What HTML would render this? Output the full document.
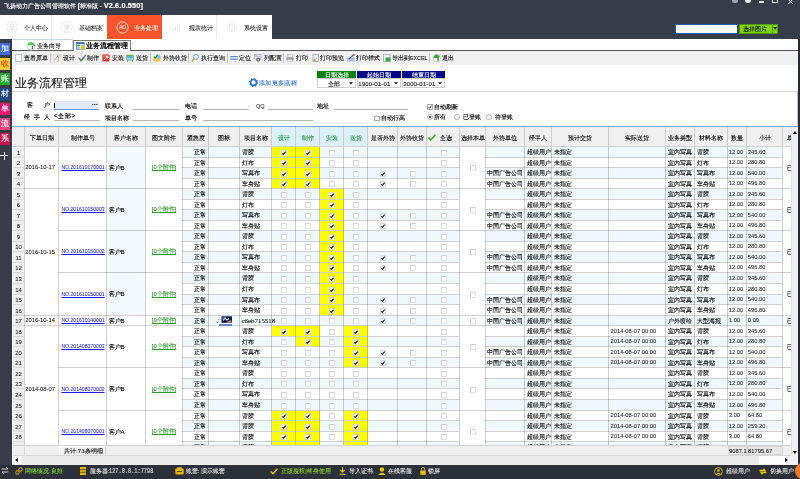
<!DOCTYPE html><html><head><meta charset='utf-8'><style>
*{margin:0;padding:0;box-sizing:border-box}
html,body{width:800px;height:479px;overflow:hidden;background:#373d48;font-family:"Liberation Sans",sans-serif;color:#222}
div{position:absolute}
.t{white-space:nowrap;font-size:6px;line-height:8px;-webkit-text-stroke:0.1px currentColor}
.u{text-decoration:underline;text-decoration-thickness:0.6px;text-underline-offset:1px}
.cb{position:absolute;width:6px;height:6px;border:1px solid #e2e2e2;border-top-color:#d2d2d2;border-left-color:#d2d2d2;background:#fff}
.ck{position:absolute;width:6px;height:6px;border:1px solid #d4d8ee;background:#fff}
.ck:after{content:"";position:absolute;left:1.3px;top:-0.2px;width:1.4px;height:2.8px;border:solid #111;border-width:0 1.1px 1.1px 0;transform:rotate(42deg)}
</style></head><body><div id='root' style='left:0;top:0;width:800px;height:479px;overflow:hidden;will-change:transform;background:#373d48'>
<div class="t" style="left:4px;top:1px;font-size:6.3px;line-height:9px;color:#fff;-webkit-text-stroke:0.15px #fff">飞扬动力广告公司管理软件 <b style='font-size:7px'>[</b>标准版 - <b style='font-size:7.4px;letter-spacing:0.1px'>V2.6.0.550]</b></div>
<div style="position:absolute;left:732px;top:0px;width:6px;height:3px;background:#9aa0a8;border-radius:0 0 2px 2px"></div>
<div style="position:absolute;left:745px;top:0px;width:6px;height:3px;background:#fff;border-radius:0 0 3px 3px"></div>
<div style="position:absolute;left:759px;top:1px;width:5px;height:1.5px;background:#e6e6e6"></div>
<div style="position:absolute;left:772px;top:0px;width:6px;height:3px;border:1px solid #d8d8d8;border-top:none"></div>
<svg style="position:absolute;left:787px;top:0" width="7" height="4" viewBox="0 0 7 4"><path d="M1 -1 L3.5 1.8 L6 -1 M1 4 L3.5 1.8 L6 4" stroke="#fff" stroke-width="1" fill="none"/></svg>
<div style="position:absolute;left:0px;top:15px;width:272px;height:24px;background:#fff"></div>
<div style="position:absolute;left:51px;top:15px;width:1px;height:24px;background:#ececec"></div>
<div style="position:absolute;left:216px;top:15px;width:1px;height:24px;background:#ececec"></div>
<div style="position:absolute;left:107px;top:15px;width:55px;height:24px;background:#f7542b"></div>
<svg style="position:absolute;left:6px;top:21px" width="12" height="12" viewBox="0 0 12 12"><circle cx="6" cy="6" r="5.4" fill="none" stroke="#dcdcdc" stroke-width="0.7"/><circle cx="6" cy="4.6" r="1.8" fill="none" stroke="#d0d0d0" stroke-width="0.7"/><path d="M2.8 9.6 Q6 6 9.2 9.6" fill="none" stroke="#d0d0d0" stroke-width="0.7"/></svg>
<svg style="position:absolute;left:61px;top:21px" width="12" height="12" viewBox="0 0 12 12"><circle cx="6" cy="6" r="5.4" fill="none" stroke="#dcdcdc" stroke-width="0.7"/><path d="M3.4 4h5.2M3.4 5.4h5.2M3.4 6.8h5.2M3.4 8.2h5.2" stroke="#d0d0d0" stroke-width="0.6"/></svg>
<svg style="position:absolute;left:116px;top:21px" width="13" height="13" viewBox="0 0 13 13"><circle cx="6.5" cy="6.5" r="5.6" fill="none" stroke="#fff" stroke-width="0.8"/><text x="6.5" y="8.4" font-size="5.2" text-anchor="middle" fill="#fff" font-family="Liberation Sans">AD</text></svg>
<svg style="position:absolute;left:171px;top:21px" width="12" height="12" viewBox="0 0 12 12"><path d="M2.5 10V7.5M4.5 10V6M6.5 10V4M8.5 10V2.5" stroke="#e0e0e0" stroke-width="0.8"/></svg>
<svg style="position:absolute;left:226px;top:21px" width="12" height="12" viewBox="0 0 12 12"><circle cx="6" cy="6" r="3" fill="none" stroke="#dedede" stroke-width="0.7"/><path d="M6 1v2M6 9v2M1 6h2M9 6h2M2.5 2.5l1.4 1.4M8.1 8.1l1.4 1.4M2.5 9.5l1.4-1.4M8.1 3.9l1.4-1.4" stroke="#dedede" stroke-width="0.7"/></svg>
<div class="t" style="left:24px;top:23.8px;font-size:6.2px;line-height:8px;color:#1a1a1a;-webkit-text-stroke:0.05px currentColor">个人中心</div>
<div class="t" style="left:79px;top:23.8px;font-size:6.2px;line-height:8px;color:#1a1a1a;-webkit-text-stroke:0.05px currentColor">基础档案</div>
<div class="t" style="left:134px;top:23.8px;font-size:6.2px;line-height:8px;color:#1a1a1a;-webkit-text-stroke:0.05px currentColor;color:#fff">业务处理</div>
<div class="t" style="left:189px;top:23.8px;font-size:6.2px;line-height:8px;color:#1a1a1a;-webkit-text-stroke:0.05px currentColor">报表统计</div>
<div class="t" style="left:244px;top:23.8px;font-size:6.2px;line-height:8px;color:#1a1a1a;-webkit-text-stroke:0.05px currentColor">系统设置</div>
<div style="position:absolute;left:675px;top:23.5px;width:63px;height:10px;background:#fff;border:1px solid #2a5db0"></div>
<div style="position:absolute;left:738.5px;top:23.5px;width:39px;height:10px;background:#7fd400;border:1px solid #4f9a00"></div>
<div style="position:absolute;left:772px;top:24px;width:0.8px;height:9px;background:#4f9a00"></div>
<div class="t" style="left:743px;top:24.5px;font-size:6.3px;line-height:8px;color:#111">选择图片</div>
<svg style="position:absolute;left:773px;top:27px" width="4" height="3" viewBox="0 0 4 3"><path d="M0 0h4L2 2.5z" fill="#111"/></svg>
<div style="position:absolute;left:0px;top:43px;width:10px;height:12px;background:#3e6ce0"></div>
<div class="t" style="left:0px;top:45px;width:10px;text-align:center;font-size:8px;line-height:8px;color:#fff">加</div>
<div style="position:absolute;left:0px;top:58px;width:10px;height:12px;background:#ffcb2e"></div>
<div class="t" style="left:0px;top:60px;width:10px;text-align:center;font-size:8px;line-height:8px;color:#d8400f">收</div>
<div style="position:absolute;left:0px;top:73px;width:10px;height:12px;background:#1fad2a"></div>
<div class="t" style="left:0px;top:75px;width:10px;text-align:center;font-size:8px;line-height:8px;color:#fff">账</div>
<div style="position:absolute;left:0px;top:88px;width:10px;height:12px;background:#1e4d8e"></div>
<div class="t" style="left:0px;top:90px;width:10px;text-align:center;font-size:8px;line-height:8px;color:#fff">材</div>
<div style="position:absolute;left:0px;top:103px;width:10px;height:12px;background:#ea1670"></div>
<div class="t" style="left:0px;top:105px;width:10px;text-align:center;font-size:8px;line-height:8px;color:#fff">单</div>
<div style="position:absolute;left:0px;top:118px;width:10px;height:12px;background:#ef3f7c"></div>
<div class="t" style="left:0px;top:120px;width:10px;text-align:center;font-size:8px;line-height:8px;color:#fff">流</div>
<div style="position:absolute;left:0px;top:133px;width:10px;height:12px;background:#c9124c"></div>
<div class="t" style="left:0px;top:135px;width:10px;text-align:center;font-size:8px;line-height:8px;color:#fff">系</div>
<div style="position:absolute;left:0.3px;top:155.3px;width:7.7px;height:1px;background:#f4f4f4"></div>
<div style="position:absolute;left:3.9px;top:151.8px;width:1px;height:8.2px;background:#f4f4f4"></div>
<div style="position:absolute;left:12px;top:39px;width:786px;height:426px;background:#fff"></div>
<div style="position:absolute;left:12px;top:50px;width:786px;height:1px;background:#555"></div>
<div style="position:absolute;left:12px;top:39.2px;width:61px;height:0.8px;background:#c9d6e3"></div>
<div style="position:absolute;left:72px;top:40px;width:0.8px;height:10px;background:#c9d6e3"></div>
<div class="t" style="left:37px;top:41.8px;font-size:6.3px;line-height:8px;color:#111;-webkit-text-stroke:0.1px currentColor">业务向导</div>
<svg style="position:absolute;left:25.5px;top:40.5px" width="10" height="10" viewBox="0 0 10 10"><circle cx="5" cy="5.3" r="3.9" fill="#fff" stroke="#a8a8a8" stroke-width="0.5"/><path d="M1.8 4.5 Q2 1.8 4.5 1.3 L6.5 1.6 L8.6 3.8 L7.6 3.8 Z" fill="#2fc02f"/><path d="M3.2 3.2 Q4 2 5.5 2.2" stroke="#7af07a" stroke-width="0.8" fill="none"/><path d="M7.2 4 L8.6 4 L8.6 5.5" fill="#0a6a0a"/><path d="M6 5 Q6.8 6 6.2 8" stroke="#0a6a0a" stroke-width="1" fill="none"/></svg>
<div style="position:absolute;left:72.5px;top:40px;width:58.5px;height:11px;background:#fff;border:1px solid #7a7a7a;border-bottom:none"></div>
<svg style="position:absolute;left:75.5px;top:41.5px" width="9" height="8" viewBox="0 0 9 8"><rect x="0.4" y="0.4" width="7.6" height="6.8" fill="#fff" stroke="#3a6ac0" stroke-width="0.8"/><rect x="0.4" y="0.4" width="7.6" height="1.6" fill="#3a6ac0"/><rect x="1.2" y="2.6" width="2.8" height="1.8" fill="#3aa53a"/><rect x="4.5" y="2.6" width="2.8" height="1.8" fill="#9ad0f0"/><rect x="1.2" y="4.9" width="2.8" height="1.8" fill="#9ad0f0"/><rect x="5" y="3.5" width="3.6" height="4.2" rx="0.8" fill="#f0c020"/></svg>
<div class="t" style="left:86px;top:41.8px;font-size:6.5px;line-height:8px;color:#000;-webkit-text-stroke:0.3px currentColor">业务流程管理</div>
<div style="position:absolute;left:14px;top:51px;width:784px;height:13.5px;background:#f0f0f0"></div>
<svg style="position:absolute;left:14.5px;top:53.5px" width="8" height="8" viewBox="0 0 8 8"><rect x="0.8" y="0.5" width="6" height="7" fill="#fff" stroke="#8aa0c8" stroke-width="0.6"/></svg>
<div class="t" style="left:24.4px;top:54px;font-size:6.1px;line-height:8px;color:#111;-webkit-text-stroke:0.1px currentColor">查看原单</div>
<div style="position:absolute;left:50.2px;top:53px;width:0.8px;height:10px;background:#c4c4c4"></div>
<svg style="position:absolute;left:53px;top:53.5px" width="8" height="8" viewBox="0 0 8 8"><rect x="0.3" y="0.8" width="7.2" height="7" fill="#f4f4f4" stroke="#d0d0d0" stroke-width="0.4"/><path d="M1 6.5 L5.5 1.5" stroke="#8a8a8a" stroke-width="0.7"/><path d="M1.2 4.5 L3 6.8" stroke="#9a9a9a" stroke-width="0.5"/><path d="M6.3 0.8 L5 7.5" stroke="#e6b040" stroke-width="1"/><circle cx="4.6" cy="2.2" r="0.6" fill="#4a6ac0"/></svg>
<div class="t" style="left:63px;top:54px;font-size:6.1px;line-height:8px;color:#111;-webkit-text-stroke:0.1px currentColor">设计</div>
<svg style="position:absolute;left:78px;top:53.5px" width="8" height="8" viewBox="0 0 8 8"><path d="M0.6 3.6 L3 6.3 L7.6 1.2" fill="none" stroke="#6a5ad8" stroke-width="1.2"/><path d="M1.8 5.2 L3 6.9 L6.5 3.6" fill="none" stroke="#2fa52f" stroke-width="1.2"/></svg>
<div class="t" style="left:87px;top:54px;font-size:6.1px;line-height:8px;color:#111;-webkit-text-stroke:0.1px currentColor">制作</div>
<svg style="position:absolute;left:102px;top:53.5px" width="8" height="8" viewBox="0 0 8 8"><rect x="0.4" y="0.6" width="7.2" height="7" rx="1" fill="#dd3a2a"/><rect x="0.4" y="0.6" width="7.2" height="3" rx="1" fill="#ef6a5a"/><path d="M2 6 L5.5 2.5 M3.8 2.3 H5.8 V4.2" fill="none" stroke="#fff" stroke-width="1"/></svg>
<div class="t" style="left:111.5px;top:54px;font-size:6.1px;line-height:8px;color:#111;-webkit-text-stroke:0.1px currentColor">安装</div>
<svg style="position:absolute;left:126px;top:53.5px" width="8" height="8" viewBox="0 0 8 8"><rect x="0.3" y="0.8" width="7.4" height="5.6" rx="0.8" fill="#5cbf3a"/><rect x="1" y="2.2" width="6" height="3.6" fill="#58b0ea"/><rect x="1" y="4" width="6" height="1.8" fill="#8fd0f8"/><path d="M1.6 6.4 V7.8 M6.4 6.4 V7.8" stroke="#3a5a8a" stroke-width="0.9"/></svg>
<div class="t" style="left:136px;top:54px;font-size:6.1px;line-height:8px;color:#111;-webkit-text-stroke:0.1px currentColor">送货</div>
<div style="position:absolute;left:150.2px;top:53px;width:0.8px;height:10px;background:#c4c4c4"></div>
<svg style="position:absolute;left:153px;top:53.5px" width="8" height="8" viewBox="0 0 8 8"><path d="M0.4 3.5 L4 2 L7.6 3.5 V7 L4 7.8 L0.4 7z" fill="#f0c43c"/><circle cx="5.2" cy="2.8" r="2.4" fill="#8ab8ea"/><path d="M0.8 2.5 L2.3 4 L4.6 0.8" fill="none" stroke="#2a9a2a" stroke-width="1.1"/></svg>
<div class="t" style="left:163px;top:54px;font-size:6.1px;line-height:8px;color:#111;-webkit-text-stroke:0.1px currentColor">外协收货</div>
<div style="position:absolute;left:188.29999999999998px;top:53px;width:0.8px;height:10px;background:#c4c4c4"></div>
<svg style="position:absolute;left:191px;top:53.5px" width="8" height="8" viewBox="0 0 8 8"><circle cx="5" cy="3" r="2.4" fill="#e6f4ff" stroke="#4a88c8" stroke-width="0.8"/><path d="M3.2 4.8 L0.7 7.4" stroke="#e8902a" stroke-width="1.4"/></svg>
<div class="t" style="left:200.6px;top:54px;font-size:6.1px;line-height:8px;color:#111;-webkit-text-stroke:0.1px currentColor">执行查询</div>
<div style="position:absolute;left:226.7px;top:53px;width:0.8px;height:10px;background:#c4c4c4"></div>
<svg style="position:absolute;left:230px;top:53.5px" width="8" height="8" viewBox="0 0 8 8"><rect x="0.3" y="2" width="7.4" height="1.3" fill="#5a8ad0"/><rect x="0.3" y="4.5" width="7.4" height="1.3" fill="#5a8ad0"/><rect x="0.3" y="3.3" width="7.4" height="1.2" fill="#c8dcf4"/></svg>
<div class="t" style="left:239px;top:54px;font-size:6.1px;line-height:8px;color:#111;-webkit-text-stroke:0.1px currentColor">定位</div>
<svg style="position:absolute;left:254px;top:53.5px" width="8" height="8" viewBox="0 0 8 8"><rect x="0.5" y="0.5" width="6.5" height="4.5" fill="#eaf2ff" stroke="#6a8ac0" stroke-width="0.5"/><path d="M0.5 2.3h6.5" stroke="#6a8ac0" stroke-width="0.5"/><circle cx="4.2" cy="5.6" r="2.1" fill="#707070"/><circle cx="4.2" cy="5.6" r="0.8" fill="#ddd"/><circle cx="2" cy="1.5" r="0.9" fill="#f0c030"/></svg>
<div class="t" style="left:264px;top:54px;font-size:6.1px;line-height:8px;color:#111;-webkit-text-stroke:0.1px currentColor">列配置</div>
<div style="position:absolute;left:283.2px;top:53px;width:0.8px;height:10px;background:#c4c4c4"></div>
<svg style="position:absolute;left:286px;top:53.5px" width="8" height="8" viewBox="0 0 8 8"><rect x="1.8" y="0.4" width="4.4" height="3" fill="#fff" stroke="#8a9ab0" stroke-width="0.5"/><rect x="0.3" y="3.2" width="7.4" height="3.3" rx="0.8" fill="#9aa4b0"/><rect x="1.5" y="5.5" width="5" height="2" fill="#fff" stroke="#999" stroke-width="0.4"/></svg>
<div class="t" style="left:296px;top:54px;font-size:6.1px;line-height:8px;color:#111;-webkit-text-stroke:0.1px currentColor">打印</div>
<svg style="position:absolute;left:311.5px;top:53.5px" width="8" height="8" viewBox="0 0 8 8"><rect x="1" y="0.3" width="5.5" height="7.2" fill="#fff" stroke="#6a90c8" stroke-width="0.6"/><path d="M2 3h3.5M2 4.5h3.5" stroke="#8ab0e0" stroke-width="0.5"/><circle cx="2.5" cy="6.2" r="1.3" fill="#e0a040"/></svg>
<div class="t" style="left:320px;top:54px;font-size:6.1px;line-height:8px;color:#111;-webkit-text-stroke:0.1px currentColor">打印预览</div>
<svg style="position:absolute;left:347px;top:53.5px" width="8" height="8" viewBox="0 0 8 8"><rect x="0.3" y="4" width="7.4" height="3.5" fill="#a8c0e0"/><path d="M2 5 L6.5 0.8" stroke="#2a5ab0" stroke-width="1.1"/><circle cx="6.8" cy="1" r="0.9" fill="#e04040"/></svg>
<div class="t" style="left:356px;top:54px;font-size:6.1px;line-height:8px;color:#111;-webkit-text-stroke:0.1px currentColor">打印样式</div>
<svg style="position:absolute;left:383px;top:53.5px" width="8" height="8" viewBox="0 0 8 8"><rect x="0.5" y="0.5" width="6.5" height="7" fill="#eef4ff" stroke="#7a9ac8" stroke-width="0.6"/><rect x="2.5" y="3.5" width="5" height="4" fill="#3aa53a"/></svg>
<div class="t" style="left:392px;top:54px;font-size:6.1px;line-height:8px;color:#111;-webkit-text-stroke:0.1px currentColor">导出到<span style='font-size:5.3px'>EXCEL</span></div>
<div style="position:absolute;left:428.7px;top:53px;width:0.8px;height:10px;background:#c4c4c4"></div>
<svg style="position:absolute;left:433px;top:53.5px" width="8" height="8" viewBox="0 0 8 8"><circle cx="4" cy="4.2" r="3.7" fill="#fff" stroke="#9a9a9a" stroke-width="0.5"/><path d="M0.5 3.8 Q1 0.5 4.2 0.5 L7.2 3 L5.8 3 L5.8 7.2 L4.3 7.2 L4.3 4 Z" fill="#2fa52f"/></svg>
<div class="t" style="left:442px;top:54px;font-size:6.1px;line-height:8px;color:#111;-webkit-text-stroke:0.1px currentColor">退出</div>
<div class="t" style="left:14.8px;top:76.5px;font-size:12px;line-height:12px;color:#111">业务流程管理</div>
<svg style="position:absolute;left:249px;top:77.5px" width="9" height="9" viewBox="0 0 9 9"><circle cx="4.5" cy="4.5" r="3" fill="none" stroke="#1f6fe0" stroke-width="1.7"/><circle cx="4.5" cy="4.5" r="3.9" fill="none" stroke="#1f6fe0" stroke-width="1.2" stroke-dasharray="1.3 1.75"/></svg>
<div class="t" style="left:259.2px;top:79.2px;font-size:6px;letter-spacing:0.3px;line-height:8px;color:#2a6ee8">添加更多流程</div>
<div style="position:absolute;left:317px;top:71px;width:39.3px;height:7px;background:#06800f"></div>
<div class="t" style="left:317px;top:70.5px;width:39.3px;text-align:center;font-size:6.2px;line-height:8px;color:#fff">日期选择</div>
<div style="position:absolute;left:317px;top:78.4px;width:39.3px;height:9.2px;background:#fff;border:1px solid #cfcfcf"></div>
<div class="t" style="left:318.2px;top:79.5px;text-align:center;width:31px;font-size:6px;line-height:8px;color:#111;letter-spacing:0.15px">全部</div>
<svg style="position:absolute;left:349.3px;top:82px" width="4" height="3" viewBox="0 0 4 3"><path d="M0 0.3h4L2 2.6z" fill="#111"/></svg>
<div style="position:absolute;left:357px;top:71px;width:43.6px;height:7px;background:#000a88"></div>
<div class="t" style="left:357px;top:70.5px;width:43.6px;text-align:center;font-size:6.2px;line-height:8px;color:#fff">起始日期</div>
<div style="position:absolute;left:357px;top:78.4px;width:43.6px;height:9.2px;background:#fff;border:1px solid #cfcfcf"></div>
<div class="t" style="left:358.2px;top:79.5px;font-size:6px;line-height:8px;color:#111;letter-spacing:0.15px">1900-01-01</div>
<svg style="position:absolute;left:393.6px;top:82px" width="4" height="3" viewBox="0 0 4 3"><path d="M0 0.3h4L2 2.6z" fill="#111"/></svg>
<div style="position:absolute;left:402px;top:71px;width:43px;height:7px;background:#000a88"></div>
<div class="t" style="left:402px;top:70.5px;width:43px;text-align:center;font-size:6.2px;line-height:8px;color:#fff">结束日期</div>
<div style="position:absolute;left:402px;top:78.4px;width:43px;height:9.2px;background:#fff;border:1px solid #cfcfcf"></div>
<div class="t" style="left:403.2px;top:79.5px;font-size:6px;line-height:8px;color:#111;letter-spacing:0.15px">3000-01-01</div>
<svg style="position:absolute;left:438px;top:82px" width="4" height="3" viewBox="0 0 4 3"><path d="M0 0.3h4L2 2.6z" fill="#111"/></svg>
<div style="position:absolute;left:12px;top:90.5px;width:786px;height:1.6px;background:#dcdcdc"></div>
<div class="t" style="left:26.9px;top:101px;font-size:6.3px;line-height:8px;color:#000;-webkit-text-stroke:0.15px currentColor">客</div>
<div class="t" style="left:43.7px;top:101px;font-size:6.3px;line-height:8px;color:#000;-webkit-text-stroke:0.15px currentColor">户</div>
<div style="position:absolute;left:53.8px;top:101px;width:45.6px;height:8.6px;background:#e1e8fb;border-bottom:1px solid #5a9ae8"></div>
<div style="position:absolute;left:54.2px;top:102.5px;width:0.7px;height:5.5px;background:#111"></div>
<div class="t" style="left:92px;top:101.4px;font-size:6px;line-height:6px;color:#333;font-weight:bold">···</div>
<div class="t" style="left:24.4px;top:112.5px;font-size:6.3px;line-height:8px;color:#000;-webkit-text-stroke:0.15px currentColor">经</div>
<div class="t" style="left:34.4px;top:112.5px;font-size:6.3px;line-height:8px;color:#000;-webkit-text-stroke:0.15px currentColor">手</div>
<div class="t" style="left:43.7px;top:112.5px;font-size:6.3px;line-height:8px;color:#000;-webkit-text-stroke:0.15px currentColor">人</div>
<div class="t" style="left:54px;top:112px;font-size:6.3px;line-height:8px;color:#000;-webkit-text-stroke:0.15px currentColor">&lt;全 部&gt;</div>
<div style="position:absolute;left:54px;top:120px;width:45.5px;height:0.8px;background:#b4b4b4"></div>
<div class="t" style="left:104.7px;top:101.5px;font-size:6.3px;line-height:8px;color:#000;-webkit-text-stroke:0.15px currentColor">联系人</div>
<div style="position:absolute;left:133.4px;top:108.8px;width:45.4px;height:0.8px;background:#b4b4b4"></div>
<div class="t" style="left:104.7px;top:113.5px;font-size:6.3px;line-height:8px;color:#000;-webkit-text-stroke:0.15px currentColor">项目名称</div>
<div style="position:absolute;left:133.4px;top:120px;width:45.4px;height:0.8px;background:#b4b4b4"></div>
<div class="t" style="left:185.4px;top:101.5px;font-size:6.3px;line-height:8px;color:#000;-webkit-text-stroke:0.15px currentColor">电话</div>
<div style="position:absolute;left:203px;top:108.8px;width:46px;height:0.8px;background:#b4b4b4"></div>
<div class="t" style="left:185.4px;top:113.5px;font-size:6.3px;line-height:8px;color:#000;-webkit-text-stroke:0.15px currentColor">单号</div>
<div style="position:absolute;left:203px;top:120px;width:110px;height:0.8px;background:#b4b4b4"></div>
<div class="t" style="left:256px;top:102px;font-size:5.5px;line-height:8px;color:#333">QQ</div>
<div style="position:absolute;left:267.8px;top:108.8px;width:45.2px;height:0.8px;background:#b4b4b4"></div>
<div class="t" style="left:316.5px;top:101.5px;font-size:6.3px;line-height:8px;color:#000;-webkit-text-stroke:0.15px currentColor">地址</div>
<div style="position:absolute;left:333.8px;top:108.8px;width:74px;height:0.8px;background:#b4b4b4"></div>
<div style="position:absolute;left:374px;top:115.5px;width:5.5px;height:5.5px;border:0.8px solid #aaa;background:#fff"></div>
<div class="t" style="left:381px;top:114px;font-size:6.3px;line-height:8px;color:#000;-webkit-text-stroke:0.15px currentColor">自动行高</div>
<div style="position:absolute;left:427px;top:104.3px;width:5.5px;height:5.5px;border:0.8px solid #aaa;background:#fff"></div>
<svg style="position:absolute;left:427.5px;top:104.8px" width="4" height="4" viewBox="0 0 4 4"><path d="M0.5 2 L1.6 3.3 L3.6 0.6" fill="none" stroke="#111" stroke-width="0.9"/></svg>
<div class="t" style="left:434.4px;top:102.8px;font-size:6.3px;line-height:8px;color:#000;-webkit-text-stroke:0.15px currentColor">自动刷新</div>
<svg style="position:absolute;left:426.5px;top:114px" width="6" height="6" viewBox="0 0 6 6"><circle cx="3" cy="3" r="2.5" fill="#fff" stroke="#888" stroke-width="0.6"/><circle cx="3" cy="3" r="1" fill="#111"/></svg>
<div class="t" style="left:434.4px;top:112.8px;font-size:6.3px;line-height:8px;color:#000;-webkit-text-stroke:0.15px currentColor">所有</div>
<svg style="position:absolute;left:454px;top:114px" width="6" height="6" viewBox="0 0 6 6"><circle cx="3" cy="3" r="2.5" fill="#fff" stroke="#888" stroke-width="0.6"/></svg>
<div class="t" style="left:462.5px;top:112.8px;font-size:6.3px;line-height:8px;color:#000;-webkit-text-stroke:0.15px currentColor">已登账</div>
<svg style="position:absolute;left:486px;top:114px" width="6" height="6" viewBox="0 0 6 6"><circle cx="3" cy="3" r="2.5" fill="#fff" stroke="#888" stroke-width="0.6"/></svg>
<div class="t" style="left:494.8px;top:112.8px;font-size:6.3px;line-height:8px;color:#000;-webkit-text-stroke:0.15px currentColor">待登账</div>
<div style="left:12.00px;top:126.00px;width:786.00px;height:1.00px;background:#7ba7d7"></div>
<div style="left:12.00px;top:127.00px;width:779.00px;height:19.00px;background:#efefef"></div>
<div style="left:12.00px;top:127.00px;width:1.00px;height:19.00px;background:#fff"></div>
<div style="left:272.00px;top:127.00px;width:23.00px;height:19.00px;background:#dcf0fb"></div>
<div style="left:296.00px;top:127.00px;width:23.00px;height:19.00px;background:#dcf0fb"></div>
<div style="left:320.00px;top:127.00px;width:23.00px;height:19.00px;background:#dcf0fb"></div>
<div style="left:344.00px;top:127.00px;width:23.00px;height:19.00px;background:#dcf0fb"></div>
<div class="t" style="left:25.00px;top:128.00px;width:33.00px;height:19.00px;line-height:19.00px;text-align:center;font-size:6.1px;color:#000">下单日期</div>
<div class="t" style="left:59.00px;top:128.00px;width:47.00px;height:19.00px;line-height:19.00px;text-align:center;font-size:6.1px;color:#000">制作单号</div>
<div class="t" style="left:107.00px;top:128.00px;width:38.00px;height:19.00px;line-height:19.00px;text-align:center;font-size:6.1px;color:#000">客户名称</div>
<div class="t" style="left:146.00px;top:128.00px;width:36.00px;height:19.00px;line-height:19.00px;text-align:center;font-size:6.1px;color:#000">图文附件</div>
<div class="t" style="left:183.00px;top:128.00px;width:25.00px;height:19.00px;line-height:19.00px;text-align:center;font-size:6.1px;color:#000">紧急度</div>
<div class="t" style="left:209.00px;top:128.00px;width:30.00px;height:19.00px;line-height:19.00px;text-align:center;font-size:6.1px;color:#000">图标</div>
<div class="t" style="left:240.00px;top:128.00px;width:31.00px;height:19.00px;line-height:19.00px;text-align:center;font-size:6.1px;color:#000">项目名称</div>
<div class="t" style="left:272.00px;top:128.00px;width:23.00px;height:19.00px;line-height:19.00px;text-align:center;font-size:6.1px;color:#000;color:#2b9a3c">设计</div>
<div class="t" style="left:296.00px;top:128.00px;width:23.00px;height:19.00px;line-height:19.00px;text-align:center;font-size:6.1px;color:#000;color:#2b9a3c">制作</div>
<div class="t" style="left:320.00px;top:128.00px;width:23.00px;height:19.00px;line-height:19.00px;text-align:center;font-size:6.1px;color:#000;color:#2b9a3c">安装</div>
<div class="t" style="left:344.00px;top:128.00px;width:23.00px;height:19.00px;line-height:19.00px;text-align:center;font-size:6.1px;color:#000;color:#2b9a3c">送货</div>
<div class="t" style="left:368.00px;top:128.00px;width:29.00px;height:19.00px;line-height:19.00px;text-align:center;font-size:6.1px;color:#000">是否外协</div>
<div class="t" style="left:398.00px;top:128.00px;width:28.00px;height:19.00px;line-height:19.00px;text-align:center;font-size:6.1px;color:#000">外协收货</div>
<div class="t" style="left:427.00px;top:128.00px;width:32.00px;height:19.00px;line-height:19.00px;text-align:center;font-size:6.1px;color:#000">&nbsp;&nbsp;&nbsp;全选</div>
<svg style="position:absolute;left:428px;top:134px" width="8" height="7" viewBox="0 0 8 7"><path d="M0.6 3.6 L2.8 6 L7.4 0.8" fill="none" stroke="#33bb22" stroke-width="1.6"/></svg>
<div class="t" style="left:460.00px;top:128.00px;width:25.00px;height:19.00px;line-height:19.00px;text-align:center;font-size:6.1px;color:#000">选择本单</div>
<div class="t" style="left:486.00px;top:128.00px;width:38.00px;height:19.00px;line-height:19.00px;text-align:center;font-size:6.1px;color:#000">外协单位</div>
<div class="t" style="left:525.00px;top:128.00px;width:26.00px;height:19.00px;line-height:19.00px;text-align:center;font-size:6.1px;color:#000">经手人</div>
<div class="t" style="left:552.00px;top:128.00px;width:56.00px;height:19.00px;line-height:19.00px;text-align:center;font-size:6.1px;color:#000">预计交货</div>
<div class="t" style="left:609.00px;top:128.00px;width:56.00px;height:19.00px;line-height:19.00px;text-align:center;font-size:6.1px;color:#000">实际送货</div>
<div class="t" style="left:666.00px;top:128.00px;width:28.00px;height:19.00px;line-height:19.00px;text-align:center;font-size:6.1px;color:#000">业务类型</div>
<div class="t" style="left:695.00px;top:128.00px;width:32.00px;height:19.00px;line-height:19.00px;text-align:center;font-size:6.1px;color:#000">材料名称</div>
<div class="t" style="left:728.00px;top:128.00px;width:18.00px;height:19.00px;line-height:19.00px;text-align:center;font-size:6.1px;color:#000">数量</div>
<div class="t" style="left:747.00px;top:128.00px;width:35.00px;height:19.00px;line-height:19.00px;text-align:center;font-size:6.1px;color:#000">小计</div>
<div class="t" style="left:786.50px;top:134.00px;font-size:6.1px;color:#000">单</div>
<div style="left:24.00px;top:127.00px;width:1.00px;height:19.00px;background:#cdcdcd"></div>
<div style="left:58.00px;top:127.00px;width:1.00px;height:19.00px;background:#cdcdcd"></div>
<div style="left:106.00px;top:127.00px;width:1.00px;height:19.00px;background:#cdcdcd"></div>
<div style="left:145.00px;top:127.00px;width:1.00px;height:19.00px;background:#cdcdcd"></div>
<div style="left:182.00px;top:127.00px;width:1.00px;height:19.00px;background:#cdcdcd"></div>
<div style="left:208.00px;top:127.00px;width:1.00px;height:19.00px;background:#cdcdcd"></div>
<div style="left:239.00px;top:127.00px;width:1.00px;height:19.00px;background:#cdcdcd"></div>
<div style="left:271.00px;top:127.00px;width:1.00px;height:19.00px;background:#cdcdcd"></div>
<div style="left:295.00px;top:127.00px;width:1.00px;height:19.00px;background:#cdcdcd"></div>
<div style="left:319.00px;top:127.00px;width:1.00px;height:19.00px;background:#cdcdcd"></div>
<div style="left:343.00px;top:127.00px;width:1.00px;height:19.00px;background:#cdcdcd"></div>
<div style="left:367.00px;top:127.00px;width:1.00px;height:19.00px;background:#cdcdcd"></div>
<div style="left:397.00px;top:127.00px;width:1.00px;height:19.00px;background:#cdcdcd"></div>
<div style="left:426.00px;top:127.00px;width:1.00px;height:19.00px;background:#cdcdcd"></div>
<div style="left:459.00px;top:127.00px;width:1.00px;height:19.00px;background:#cdcdcd"></div>
<div style="left:485.00px;top:127.00px;width:1.00px;height:19.00px;background:#cdcdcd"></div>
<div style="left:524.00px;top:127.00px;width:1.00px;height:19.00px;background:#cdcdcd"></div>
<div style="left:551.00px;top:127.00px;width:1.00px;height:19.00px;background:#cdcdcd"></div>
<div style="left:608.00px;top:127.00px;width:1.00px;height:19.00px;background:#cdcdcd"></div>
<div style="left:665.00px;top:127.00px;width:1.00px;height:19.00px;background:#cdcdcd"></div>
<div style="left:694.00px;top:127.00px;width:1.00px;height:19.00px;background:#cdcdcd"></div>
<div style="left:727.00px;top:127.00px;width:1.00px;height:19.00px;background:#cdcdcd"></div>
<div style="left:746.00px;top:127.00px;width:1.00px;height:19.00px;background:#cdcdcd"></div>
<div style="left:782.00px;top:127.00px;width:1.00px;height:19.00px;background:#cdcdcd"></div>
<div style="left:12.00px;top:146.00px;width:779.00px;height:1.00px;background:#d2d2d2"></div>
<div style="left:12px;top:147px;width:779px;height:298px;overflow:hidden">
<div style="left:0.00px;top:0.00px;width:779.00px;height:298.00px;background:#fff"></div>
<div style="left:1.00px;top:0.00px;width:11.00px;height:320.00px;background:#efefef"></div>
<div style="left:171.00px;top:0.00px;width:276.00px;height:10.00px;background:#eef8fd"></div>
<div style="left:474.00px;top:0.00px;width:296.00px;height:10.00px;background:#eef8fd"></div>
<div style="left:260.00px;top:0.00px;width:24.00px;height:10.00px;background:#ffff00"></div>
<div style="left:284.00px;top:0.00px;width:24.00px;height:10.00px;background:#ffff00"></div>
<div style="left:260.00px;top:11.00px;width:24.00px;height:9.00px;background:#ffff00"></div>
<div style="left:284.00px;top:11.00px;width:24.00px;height:9.00px;background:#ffff00"></div>
<div style="left:171.00px;top:21.00px;width:276.00px;height:10.00px;background:#eef8fd"></div>
<div style="left:474.00px;top:21.00px;width:296.00px;height:10.00px;background:#eef8fd"></div>
<div style="left:260.00px;top:21.00px;width:24.00px;height:10.00px;background:#ffff00"></div>
<div style="left:284.00px;top:21.00px;width:24.00px;height:10.00px;background:#ffff00"></div>
<div style="left:260.00px;top:32.00px;width:24.00px;height:9.00px;background:#ffff00"></div>
<div style="left:284.00px;top:32.00px;width:24.00px;height:9.00px;background:#ffff00"></div>
<div style="left:171.00px;top:42.00px;width:276.00px;height:10.00px;background:#eef8fd"></div>
<div style="left:474.00px;top:42.00px;width:296.00px;height:10.00px;background:#eef8fd"></div>
<div style="left:308.00px;top:42.00px;width:24.00px;height:10.00px;background:#ffff00"></div>
<div style="left:308.00px;top:53.00px;width:24.00px;height:9.00px;background:#ffff00"></div>
<div style="left:171.00px;top:63.00px;width:276.00px;height:10.00px;background:#eef8fd"></div>
<div style="left:474.00px;top:63.00px;width:296.00px;height:10.00px;background:#eef8fd"></div>
<div style="left:308.00px;top:63.00px;width:24.00px;height:10.00px;background:#ffff00"></div>
<div style="left:308.00px;top:74.00px;width:24.00px;height:9.00px;background:#ffff00"></div>
<div style="left:171.00px;top:84.00px;width:276.00px;height:10.00px;background:#eef8fd"></div>
<div style="left:474.00px;top:84.00px;width:296.00px;height:10.00px;background:#eef8fd"></div>
<div style="left:308.00px;top:84.00px;width:24.00px;height:10.00px;background:#ffff00"></div>
<div style="left:308.00px;top:95.00px;width:24.00px;height:9.00px;background:#ffff00"></div>
<div style="left:171.00px;top:105.00px;width:276.00px;height:10.00px;background:#eef8fd"></div>
<div style="left:474.00px;top:105.00px;width:296.00px;height:10.00px;background:#eef8fd"></div>
<div style="left:308.00px;top:105.00px;width:24.00px;height:10.00px;background:#ffff00"></div>
<div style="left:308.00px;top:116.00px;width:24.00px;height:9.00px;background:#ffff00"></div>
<div style="left:171.00px;top:126.00px;width:276.00px;height:10.00px;background:#eef8fd"></div>
<div style="left:474.00px;top:126.00px;width:296.00px;height:10.00px;background:#eef8fd"></div>
<div style="left:308.00px;top:126.00px;width:24.00px;height:10.00px;background:#ffff00"></div>
<div style="left:308.00px;top:137.00px;width:24.00px;height:10.00px;background:#ffff00"></div>
<div style="left:171.00px;top:148.00px;width:276.00px;height:9.00px;background:#eef8fd"></div>
<div style="left:474.00px;top:148.00px;width:296.00px;height:9.00px;background:#eef8fd"></div>
<div style="left:308.00px;top:148.00px;width:24.00px;height:9.00px;background:#ffff00"></div>
<div style="left:308.00px;top:158.00px;width:24.00px;height:10.00px;background:#ffff00"></div>
<div style="left:171.00px;top:169.00px;width:276.00px;height:9.00px;background:#eef8fd"></div>
<div style="left:474.00px;top:169.00px;width:296.00px;height:9.00px;background:#eef8fd"></div>
<div style="left:260.00px;top:179.00px;width:24.00px;height:10.00px;background:#ffff00"></div>
<div style="left:284.00px;top:179.00px;width:24.00px;height:10.00px;background:#ffff00"></div>
<div style="left:332.00px;top:179.00px;width:24.00px;height:10.00px;background:#ffff00"></div>
<div style="left:171.00px;top:190.00px;width:276.00px;height:9.00px;background:#eef8fd"></div>
<div style="left:474.00px;top:190.00px;width:296.00px;height:9.00px;background:#eef8fd"></div>
<div style="left:284.00px;top:190.00px;width:24.00px;height:9.00px;background:#ffff00"></div>
<div style="left:332.00px;top:190.00px;width:24.00px;height:9.00px;background:#ffff00"></div>
<div style="left:332.00px;top:200.00px;width:24.00px;height:10.00px;background:#ffff00"></div>
<div style="left:171.00px;top:211.00px;width:276.00px;height:9.00px;background:#eef8fd"></div>
<div style="left:474.00px;top:211.00px;width:296.00px;height:9.00px;background:#eef8fd"></div>
<div style="left:332.00px;top:211.00px;width:24.00px;height:9.00px;background:#ffff00"></div>
<div style="left:171.00px;top:232.00px;width:276.00px;height:9.00px;background:#eef8fd"></div>
<div style="left:474.00px;top:232.00px;width:296.00px;height:9.00px;background:#eef8fd"></div>
<div style="left:171.00px;top:253.00px;width:276.00px;height:10.00px;background:#eef8fd"></div>
<div style="left:474.00px;top:253.00px;width:296.00px;height:10.00px;background:#eef8fd"></div>
<div style="left:260.00px;top:264.00px;width:24.00px;height:9.00px;background:#ffff00"></div>
<div style="left:284.00px;top:264.00px;width:24.00px;height:9.00px;background:#ffff00"></div>
<div style="left:332.00px;top:264.00px;width:24.00px;height:9.00px;background:#ffff00"></div>
<div style="left:171.00px;top:274.00px;width:276.00px;height:10.00px;background:#eef8fd"></div>
<div style="left:474.00px;top:274.00px;width:296.00px;height:10.00px;background:#eef8fd"></div>
<div style="left:260.00px;top:274.00px;width:24.00px;height:10.00px;background:#ffff00"></div>
<div style="left:284.00px;top:274.00px;width:24.00px;height:10.00px;background:#ffff00"></div>
<div style="left:332.00px;top:274.00px;width:24.00px;height:10.00px;background:#ffff00"></div>
<div style="left:260.00px;top:285.00px;width:24.00px;height:9.00px;background:#ffff00"></div>
<div style="left:284.00px;top:285.00px;width:24.00px;height:9.00px;background:#ffff00"></div>
<div style="left:332.00px;top:285.00px;width:24.00px;height:9.00px;background:#ffff00"></div>
<div style="left:171.00px;top:295.00px;width:276.00px;height:10.00px;background:#eef8fd"></div>
<div style="left:474.00px;top:295.00px;width:296.00px;height:10.00px;background:#eef8fd"></div>
<div style="left:260.00px;top:295.00px;width:24.00px;height:10.00px;background:#ffff00"></div>
<div style="left:284.00px;top:295.00px;width:24.00px;height:10.00px;background:#ffff00"></div>
<div style="left:332.00px;top:295.00px;width:24.00px;height:10.00px;background:#ffff00"></div>
<div style="left:260.00px;top:306.00px;width:24.00px;height:9.00px;background:#ffff00"></div>
<div style="left:284.00px;top:306.00px;width:24.00px;height:9.00px;background:#ffff00"></div>
<div style="left:332.00px;top:306.00px;width:24.00px;height:9.00px;background:#ffff00"></div>
<div style="left:95.00px;top:0.00px;width:38.00px;height:168.00px;background:#f2fafd"></div>
<div style="left:1.00px;top:10.00px;width:11.00px;height:1.00px;background:#d9d9d9"></div>
<div style="left:170.00px;top:10.00px;width:277.00px;height:1.00px;background:rgba(0,0,0,0.19)"></div>
<div style="left:473.00px;top:10.00px;width:297.00px;height:1.00px;background:rgba(0,0,0,0.19)"></div>
<div style="left:1.00px;top:20.00px;width:11.00px;height:1.00px;background:#d9d9d9"></div>
<div style="left:170.00px;top:20.00px;width:277.00px;height:1.00px;background:rgba(0,0,0,0.19)"></div>
<div style="left:473.00px;top:20.00px;width:297.00px;height:1.00px;background:rgba(0,0,0,0.19)"></div>
<div style="left:1.00px;top:31.00px;width:11.00px;height:1.00px;background:#d9d9d9"></div>
<div style="left:170.00px;top:31.00px;width:277.00px;height:1.00px;background:rgba(0,0,0,0.19)"></div>
<div style="left:473.00px;top:31.00px;width:297.00px;height:1.00px;background:rgba(0,0,0,0.19)"></div>
<div style="left:1.00px;top:41.00px;width:11.00px;height:1.00px;background:#d9d9d9"></div>
<div style="left:170.00px;top:41.00px;width:277.00px;height:1.00px;background:rgba(0,0,0,0.19)"></div>
<div style="left:473.00px;top:41.00px;width:297.00px;height:1.00px;background:rgba(0,0,0,0.19)"></div>
<div style="left:1.00px;top:52.00px;width:11.00px;height:1.00px;background:#d9d9d9"></div>
<div style="left:170.00px;top:52.00px;width:277.00px;height:1.00px;background:rgba(0,0,0,0.19)"></div>
<div style="left:473.00px;top:52.00px;width:297.00px;height:1.00px;background:rgba(0,0,0,0.19)"></div>
<div style="left:1.00px;top:62.00px;width:11.00px;height:1.00px;background:#d9d9d9"></div>
<div style="left:170.00px;top:62.00px;width:277.00px;height:1.00px;background:rgba(0,0,0,0.19)"></div>
<div style="left:473.00px;top:62.00px;width:297.00px;height:1.00px;background:rgba(0,0,0,0.19)"></div>
<div style="left:1.00px;top:73.00px;width:11.00px;height:1.00px;background:#d9d9d9"></div>
<div style="left:170.00px;top:73.00px;width:277.00px;height:1.00px;background:rgba(0,0,0,0.19)"></div>
<div style="left:473.00px;top:73.00px;width:297.00px;height:1.00px;background:rgba(0,0,0,0.19)"></div>
<div style="left:1.00px;top:83.00px;width:11.00px;height:1.00px;background:#d9d9d9"></div>
<div style="left:170.00px;top:83.00px;width:277.00px;height:1.00px;background:rgba(0,0,0,0.19)"></div>
<div style="left:473.00px;top:83.00px;width:297.00px;height:1.00px;background:rgba(0,0,0,0.19)"></div>
<div style="left:1.00px;top:94.00px;width:11.00px;height:1.00px;background:#d9d9d9"></div>
<div style="left:170.00px;top:94.00px;width:277.00px;height:1.00px;background:rgba(0,0,0,0.19)"></div>
<div style="left:473.00px;top:94.00px;width:297.00px;height:1.00px;background:rgba(0,0,0,0.19)"></div>
<div style="left:1.00px;top:104.00px;width:11.00px;height:1.00px;background:#d9d9d9"></div>
<div style="left:170.00px;top:104.00px;width:277.00px;height:1.00px;background:rgba(0,0,0,0.19)"></div>
<div style="left:473.00px;top:104.00px;width:297.00px;height:1.00px;background:rgba(0,0,0,0.19)"></div>
<div style="left:1.00px;top:115.00px;width:11.00px;height:1.00px;background:#d9d9d9"></div>
<div style="left:170.00px;top:115.00px;width:277.00px;height:1.00px;background:rgba(0,0,0,0.19)"></div>
<div style="left:473.00px;top:115.00px;width:297.00px;height:1.00px;background:rgba(0,0,0,0.19)"></div>
<div style="left:1.00px;top:125.00px;width:11.00px;height:1.00px;background:#d9d9d9"></div>
<div style="left:170.00px;top:125.00px;width:277.00px;height:1.00px;background:rgba(0,0,0,0.19)"></div>
<div style="left:473.00px;top:125.00px;width:297.00px;height:1.00px;background:rgba(0,0,0,0.19)"></div>
<div style="left:1.00px;top:136.00px;width:11.00px;height:1.00px;background:#d9d9d9"></div>
<div style="left:170.00px;top:136.00px;width:277.00px;height:1.00px;background:rgba(0,0,0,0.19)"></div>
<div style="left:473.00px;top:136.00px;width:297.00px;height:1.00px;background:rgba(0,0,0,0.19)"></div>
<div style="left:1.00px;top:147.00px;width:11.00px;height:1.00px;background:#d9d9d9"></div>
<div style="left:170.00px;top:147.00px;width:277.00px;height:1.00px;background:rgba(0,0,0,0.19)"></div>
<div style="left:473.00px;top:147.00px;width:297.00px;height:1.00px;background:rgba(0,0,0,0.19)"></div>
<div style="left:1.00px;top:157.00px;width:11.00px;height:1.00px;background:#d9d9d9"></div>
<div style="left:170.00px;top:157.00px;width:277.00px;height:1.00px;background:rgba(0,0,0,0.19)"></div>
<div style="left:473.00px;top:157.00px;width:297.00px;height:1.00px;background:rgba(0,0,0,0.19)"></div>
<div style="left:1.00px;top:168.00px;width:11.00px;height:1.00px;background:#d9d9d9"></div>
<div style="left:170.00px;top:168.00px;width:277.00px;height:1.00px;background:rgba(0,0,0,0.19)"></div>
<div style="left:473.00px;top:168.00px;width:297.00px;height:1.00px;background:rgba(0,0,0,0.19)"></div>
<div style="left:1.00px;top:178.00px;width:11.00px;height:1.00px;background:#d9d9d9"></div>
<div style="left:170.00px;top:178.00px;width:277.00px;height:1.00px;background:rgba(0,0,0,0.19)"></div>
<div style="left:473.00px;top:178.00px;width:297.00px;height:1.00px;background:rgba(0,0,0,0.19)"></div>
<div style="left:1.00px;top:189.00px;width:11.00px;height:1.00px;background:#d9d9d9"></div>
<div style="left:170.00px;top:189.00px;width:277.00px;height:1.00px;background:rgba(0,0,0,0.19)"></div>
<div style="left:473.00px;top:189.00px;width:297.00px;height:1.00px;background:rgba(0,0,0,0.19)"></div>
<div style="left:1.00px;top:199.00px;width:11.00px;height:1.00px;background:#d9d9d9"></div>
<div style="left:170.00px;top:199.00px;width:277.00px;height:1.00px;background:rgba(0,0,0,0.19)"></div>
<div style="left:473.00px;top:199.00px;width:297.00px;height:1.00px;background:rgba(0,0,0,0.19)"></div>
<div style="left:1.00px;top:210.00px;width:11.00px;height:1.00px;background:#d9d9d9"></div>
<div style="left:170.00px;top:210.00px;width:277.00px;height:1.00px;background:rgba(0,0,0,0.19)"></div>
<div style="left:473.00px;top:210.00px;width:297.00px;height:1.00px;background:rgba(0,0,0,0.19)"></div>
<div style="left:1.00px;top:220.00px;width:11.00px;height:1.00px;background:#d9d9d9"></div>
<div style="left:170.00px;top:220.00px;width:277.00px;height:1.00px;background:rgba(0,0,0,0.19)"></div>
<div style="left:473.00px;top:220.00px;width:297.00px;height:1.00px;background:rgba(0,0,0,0.19)"></div>
<div style="left:1.00px;top:231.00px;width:11.00px;height:1.00px;background:#d9d9d9"></div>
<div style="left:170.00px;top:231.00px;width:277.00px;height:1.00px;background:rgba(0,0,0,0.19)"></div>
<div style="left:473.00px;top:231.00px;width:297.00px;height:1.00px;background:rgba(0,0,0,0.19)"></div>
<div style="left:1.00px;top:241.00px;width:11.00px;height:1.00px;background:#d9d9d9"></div>
<div style="left:170.00px;top:241.00px;width:277.00px;height:1.00px;background:rgba(0,0,0,0.19)"></div>
<div style="left:473.00px;top:241.00px;width:297.00px;height:1.00px;background:rgba(0,0,0,0.19)"></div>
<div style="left:1.00px;top:252.00px;width:11.00px;height:1.00px;background:#d9d9d9"></div>
<div style="left:170.00px;top:252.00px;width:277.00px;height:1.00px;background:rgba(0,0,0,0.19)"></div>
<div style="left:473.00px;top:252.00px;width:297.00px;height:1.00px;background:rgba(0,0,0,0.19)"></div>
<div style="left:1.00px;top:263.00px;width:11.00px;height:1.00px;background:#d9d9d9"></div>
<div style="left:170.00px;top:263.00px;width:277.00px;height:1.00px;background:rgba(0,0,0,0.19)"></div>
<div style="left:473.00px;top:263.00px;width:297.00px;height:1.00px;background:rgba(0,0,0,0.19)"></div>
<div style="left:1.00px;top:273.00px;width:11.00px;height:1.00px;background:#d9d9d9"></div>
<div style="left:170.00px;top:273.00px;width:277.00px;height:1.00px;background:rgba(0,0,0,0.19)"></div>
<div style="left:473.00px;top:273.00px;width:297.00px;height:1.00px;background:rgba(0,0,0,0.19)"></div>
<div style="left:1.00px;top:284.00px;width:11.00px;height:1.00px;background:#d9d9d9"></div>
<div style="left:170.00px;top:284.00px;width:277.00px;height:1.00px;background:rgba(0,0,0,0.19)"></div>
<div style="left:473.00px;top:284.00px;width:297.00px;height:1.00px;background:rgba(0,0,0,0.19)"></div>
<div style="left:1.00px;top:294.00px;width:11.00px;height:1.00px;background:#d9d9d9"></div>
<div style="left:170.00px;top:294.00px;width:277.00px;height:1.00px;background:rgba(0,0,0,0.19)"></div>
<div style="left:473.00px;top:294.00px;width:297.00px;height:1.00px;background:rgba(0,0,0,0.19)"></div>
<div style="left:1.00px;top:305.00px;width:11.00px;height:1.00px;background:#d9d9d9"></div>
<div style="left:170.00px;top:305.00px;width:277.00px;height:1.00px;background:rgba(0,0,0,0.19)"></div>
<div style="left:473.00px;top:305.00px;width:297.00px;height:1.00px;background:rgba(0,0,0,0.19)"></div>
<div style="left:1.00px;top:315.00px;width:11.00px;height:1.00px;background:#d9d9d9"></div>
<div style="left:170.00px;top:315.00px;width:277.00px;height:1.00px;background:rgba(0,0,0,0.19)"></div>
<div style="left:473.00px;top:315.00px;width:297.00px;height:1.00px;background:rgba(0,0,0,0.19)"></div>
<div style="left:12.00px;top:41.00px;width:34.00px;height:1.00px;background:rgba(0,0,0,0.19)"></div>
<div class="t" style="left:13.30px;top:0.30px;height:41.00px;line-height:41.00px;text-align:left;font-size:5.8px;-webkit-text-stroke:0.05px currentColor;color:#111;">2016-10-17</div>
<div style="left:12.00px;top:168.00px;width:34.00px;height:1.00px;background:rgba(0,0,0,0.19)"></div>
<div class="t" style="left:13.30px;top:42.30px;height:126.00px;line-height:126.00px;text-align:left;font-size:5.8px;-webkit-text-stroke:0.05px currentColor;color:#111;">2016-10-15</div>
<div style="left:12.00px;top:178.00px;width:34.00px;height:1.00px;background:rgba(0,0,0,0.19)"></div>
<div class="t" style="left:13.30px;top:169.30px;height:9.00px;line-height:9.00px;text-align:left;font-size:5.8px;-webkit-text-stroke:0.05px currentColor;color:#111;">2016-10-14</div>
<div style="left:12.00px;top:305.00px;width:34.00px;height:1.00px;background:rgba(0,0,0,0.19)"></div>
<div class="t" style="left:13.30px;top:179.30px;height:126.00px;line-height:126.00px;text-align:left;font-size:5.8px;-webkit-text-stroke:0.05px currentColor;color:#111;">2014-08-07</div>
<div style="left:46.00px;top:41.00px;width:48.00px;height:1.00px;background:rgba(0,0,0,0.19)"></div>
<div style="left:94.00px;top:41.00px;width:39.00px;height:1.00px;background:rgba(0,0,0,0.19)"></div>
<div style="left:133.00px;top:41.00px;width:37.00px;height:1.00px;background:rgba(0,0,0,0.19)"></div>
<div style="left:447.00px;top:41.00px;width:26.00px;height:1.00px;background:rgba(0,0,0,0.19)"></div>
<div style="left:770.00px;top:41.00px;width:48.00px;height:1.00px;background:rgba(0,0,0,0.19)"></div>
<div class="t" style="left:47.00px;top:0.30px;width:47.00px;height:41.00px;line-height:41.00px;text-align:center;font-size:5.8px;-webkit-text-stroke:0.05px currentColor;color:#1a1ae8;text-decoration:underline;text-decoration-thickness:0.6px;text-underline-offset:0.8px"><span style="position:absolute;left:50%;top:0;text-decoration:underline;text-decoration-thickness:0.6px;text-underline-offset:0.8px;transform:translateX(-50%) scaleX(0.88);transform-origin:50% 50%">NO.201610170001</span></div>
<div class="t" style="left:96.50px;top:0.30px;height:41.00px;line-height:41.00px;text-align:left;font-size:6.1px;color:#000;">客户B</div>
<div class="t" style="left:134.00px;top:0.30px;width:36.00px;height:41.00px;line-height:41.00px;text-align:center;font-size:5.8px;color:#2a9a2a;text-decoration:underline;text-decoration-thickness:0.6px;text-underline-offset:0.8px">[0个附件]</div>
<div class="cb" style="left:458px;top:18px"></div>
<div class="t" style="left:775.00px;top:0.30px;height:41.00px;line-height:41.00px;text-align:left;font-size:6.1px;color:#000;">已</div>
<div style="left:46.00px;top:83.00px;width:48.00px;height:1.00px;background:rgba(0,0,0,0.19)"></div>
<div style="left:94.00px;top:83.00px;width:39.00px;height:1.00px;background:rgba(0,0,0,0.19)"></div>
<div style="left:133.00px;top:83.00px;width:37.00px;height:1.00px;background:rgba(0,0,0,0.19)"></div>
<div style="left:447.00px;top:83.00px;width:26.00px;height:1.00px;background:rgba(0,0,0,0.19)"></div>
<div style="left:770.00px;top:83.00px;width:48.00px;height:1.00px;background:rgba(0,0,0,0.19)"></div>
<div class="t" style="left:47.00px;top:42.30px;width:47.00px;height:41.00px;line-height:41.00px;text-align:center;font-size:5.8px;-webkit-text-stroke:0.05px currentColor;color:#1a1ae8;text-decoration:underline;text-decoration-thickness:0.6px;text-underline-offset:0.8px"><span style="position:absolute;left:50%;top:0;text-decoration:underline;text-decoration-thickness:0.6px;text-underline-offset:0.8px;transform:translateX(-50%) scaleX(0.88);transform-origin:50% 50%">NO.201610150003</span></div>
<div class="t" style="left:96.50px;top:42.30px;height:41.00px;line-height:41.00px;text-align:left;font-size:6.1px;color:#000;">客户B</div>
<div class="t" style="left:134.00px;top:42.30px;width:36.00px;height:41.00px;line-height:41.00px;text-align:center;font-size:5.8px;color:#2a9a2a;text-decoration:underline;text-decoration-thickness:0.6px;text-underline-offset:0.8px">[0个附件]</div>
<div class="cb" style="left:458px;top:60px"></div>
<div class="t" style="left:775.00px;top:42.30px;height:41.00px;line-height:41.00px;text-align:left;font-size:6.1px;color:#000;">已</div>
<div style="left:46.00px;top:125.00px;width:48.00px;height:1.00px;background:rgba(0,0,0,0.19)"></div>
<div style="left:94.00px;top:125.00px;width:39.00px;height:1.00px;background:rgba(0,0,0,0.19)"></div>
<div style="left:133.00px;top:125.00px;width:37.00px;height:1.00px;background:rgba(0,0,0,0.19)"></div>
<div style="left:447.00px;top:125.00px;width:26.00px;height:1.00px;background:rgba(0,0,0,0.19)"></div>
<div style="left:770.00px;top:125.00px;width:48.00px;height:1.00px;background:rgba(0,0,0,0.19)"></div>
<div class="t" style="left:47.00px;top:84.30px;width:47.00px;height:41.00px;line-height:41.00px;text-align:center;font-size:5.8px;-webkit-text-stroke:0.05px currentColor;color:#1a1ae8;text-decoration:underline;text-decoration-thickness:0.6px;text-underline-offset:0.8px"><span style="position:absolute;left:50%;top:0;text-decoration:underline;text-decoration-thickness:0.6px;text-underline-offset:0.8px;transform:translateX(-50%) scaleX(0.88);transform-origin:50% 50%">NO.201610150002</span></div>
<div class="t" style="left:96.50px;top:84.30px;height:41.00px;line-height:41.00px;text-align:left;font-size:6.1px;color:#000;">客户B</div>
<div class="t" style="left:134.00px;top:84.30px;width:36.00px;height:41.00px;line-height:41.00px;text-align:center;font-size:5.8px;color:#2a9a2a;text-decoration:underline;text-decoration-thickness:0.6px;text-underline-offset:0.8px">[0个附件]</div>
<div class="cb" style="left:458px;top:102px"></div>
<div class="t" style="left:775.00px;top:84.30px;height:41.00px;line-height:41.00px;text-align:left;font-size:6.1px;color:#000;">已</div>
<div style="left:46.00px;top:168.00px;width:48.00px;height:1.00px;background:rgba(0,0,0,0.19)"></div>
<div style="left:94.00px;top:168.00px;width:39.00px;height:1.00px;background:rgba(0,0,0,0.19)"></div>
<div style="left:133.00px;top:168.00px;width:37.00px;height:1.00px;background:rgba(0,0,0,0.19)"></div>
<div style="left:447.00px;top:168.00px;width:26.00px;height:1.00px;background:rgba(0,0,0,0.19)"></div>
<div style="left:770.00px;top:168.00px;width:48.00px;height:1.00px;background:rgba(0,0,0,0.19)"></div>
<div class="t" style="left:47.00px;top:126.30px;width:47.00px;height:42.00px;line-height:42.00px;text-align:center;font-size:5.8px;-webkit-text-stroke:0.05px currentColor;color:#1a1ae8;text-decoration:underline;text-decoration-thickness:0.6px;text-underline-offset:0.8px"><span style="position:absolute;left:50%;top:0;text-decoration:underline;text-decoration-thickness:0.6px;text-underline-offset:0.8px;transform:translateX(-50%) scaleX(0.88);transform-origin:50% 50%">NO.201610150001</span></div>
<div class="t" style="left:96.50px;top:126.30px;height:42.00px;line-height:42.00px;text-align:left;font-size:6.1px;color:#000;">客户B</div>
<div class="t" style="left:134.00px;top:126.30px;width:36.00px;height:42.00px;line-height:42.00px;text-align:center;font-size:5.8px;color:#2a9a2a;text-decoration:underline;text-decoration-thickness:0.6px;text-underline-offset:0.8px">[0个附件]</div>
<div class="cb" style="left:458px;top:145px"></div>
<div class="t" style="left:775.00px;top:126.30px;height:42.00px;line-height:42.00px;text-align:left;font-size:6.1px;color:#000;">已</div>
<div style="left:46.00px;top:178.00px;width:48.00px;height:1.00px;background:rgba(0,0,0,0.19)"></div>
<div style="left:94.00px;top:178.00px;width:39.00px;height:1.00px;background:rgba(0,0,0,0.19)"></div>
<div style="left:133.00px;top:178.00px;width:37.00px;height:1.00px;background:rgba(0,0,0,0.19)"></div>
<div style="left:447.00px;top:178.00px;width:26.00px;height:1.00px;background:rgba(0,0,0,0.19)"></div>
<div style="left:770.00px;top:178.00px;width:48.00px;height:1.00px;background:rgba(0,0,0,0.19)"></div>
<div class="t" style="left:47.00px;top:169.30px;width:47.00px;height:9.00px;line-height:9.00px;text-align:center;font-size:5.8px;-webkit-text-stroke:0.05px currentColor;color:#1a1ae8;text-decoration:underline;text-decoration-thickness:0.6px;text-underline-offset:0.8px"><span style="position:absolute;left:50%;top:0;text-decoration:underline;text-decoration-thickness:0.6px;text-underline-offset:0.8px;transform:translateX(-50%) scaleX(0.88);transform-origin:50% 50%">NO.201610140001</span></div>
<div class="t" style="left:96.50px;top:169.30px;height:9.00px;line-height:9.00px;text-align:left;font-size:6.1px;color:#000;">客户B</div>
<div class="t" style="left:134.00px;top:169.30px;width:36.00px;height:9.00px;line-height:9.00px;text-align:center;font-size:5.8px;color:#2a9a2a;text-decoration:underline;text-decoration-thickness:0.6px;text-underline-offset:0.8px">[0个附件]</div>
<div class="cb" style="left:458px;top:171px"></div>
<div class="t" style="left:775.00px;top:169.30px;height:9.00px;line-height:9.00px;text-align:left;font-size:6.1px;color:#000;">已</div>
<div style="left:46.00px;top:220.00px;width:48.00px;height:1.00px;background:rgba(0,0,0,0.19)"></div>
<div style="left:94.00px;top:220.00px;width:39.00px;height:1.00px;background:rgba(0,0,0,0.19)"></div>
<div style="left:133.00px;top:220.00px;width:37.00px;height:1.00px;background:rgba(0,0,0,0.19)"></div>
<div style="left:447.00px;top:220.00px;width:26.00px;height:1.00px;background:rgba(0,0,0,0.19)"></div>
<div style="left:770.00px;top:220.00px;width:48.00px;height:1.00px;background:rgba(0,0,0,0.19)"></div>
<div class="t" style="left:47.00px;top:179.30px;width:47.00px;height:41.00px;line-height:41.00px;text-align:center;font-size:5.8px;-webkit-text-stroke:0.05px currentColor;color:#1a1ae8;text-decoration:underline;text-decoration-thickness:0.6px;text-underline-offset:0.8px"><span style="position:absolute;left:50%;top:0;text-decoration:underline;text-decoration-thickness:0.6px;text-underline-offset:0.8px;transform:translateX(-50%) scaleX(0.88);transform-origin:50% 50%">NO.201408070003</span></div>
<div class="t" style="left:96.50px;top:179.30px;height:41.00px;line-height:41.00px;text-align:left;font-size:6.1px;color:#000;">客户B</div>
<div class="t" style="left:134.00px;top:179.30px;width:36.00px;height:41.00px;line-height:41.00px;text-align:center;font-size:5.8px;color:#2a9a2a;text-decoration:underline;text-decoration-thickness:0.6px;text-underline-offset:0.8px">[0个附件]</div>
<div class="cb" style="left:458px;top:197px"></div>
<div class="t" style="left:775.00px;top:179.30px;height:41.00px;line-height:41.00px;text-align:left;font-size:6.1px;color:#000;">已</div>
<div style="left:46.00px;top:263.00px;width:48.00px;height:1.00px;background:rgba(0,0,0,0.19)"></div>
<div style="left:94.00px;top:263.00px;width:39.00px;height:1.00px;background:rgba(0,0,0,0.19)"></div>
<div style="left:133.00px;top:263.00px;width:37.00px;height:1.00px;background:rgba(0,0,0,0.19)"></div>
<div style="left:447.00px;top:263.00px;width:26.00px;height:1.00px;background:rgba(0,0,0,0.19)"></div>
<div style="left:770.00px;top:263.00px;width:48.00px;height:1.00px;background:rgba(0,0,0,0.19)"></div>
<div class="t" style="left:47.00px;top:221.30px;width:47.00px;height:42.00px;line-height:42.00px;text-align:center;font-size:5.8px;-webkit-text-stroke:0.05px currentColor;color:#1a1ae8;text-decoration:underline;text-decoration-thickness:0.6px;text-underline-offset:0.8px"><span style="position:absolute;left:50%;top:0;text-decoration:underline;text-decoration-thickness:0.6px;text-underline-offset:0.8px;transform:translateX(-50%) scaleX(0.88);transform-origin:50% 50%">NO.201408070002</span></div>
<div class="t" style="left:96.50px;top:221.30px;height:42.00px;line-height:42.00px;text-align:left;font-size:6.1px;color:#000;">客户B</div>
<div class="t" style="left:134.00px;top:221.30px;width:36.00px;height:42.00px;line-height:42.00px;text-align:center;font-size:5.8px;color:#2a9a2a;text-decoration:underline;text-decoration-thickness:0.6px;text-underline-offset:0.8px">[0个附件]</div>
<div class="cb" style="left:458px;top:240px"></div>
<div class="t" style="left:775.00px;top:221.30px;height:42.00px;line-height:42.00px;text-align:left;font-size:6.1px;color:#000;">已</div>
<div style="left:46.00px;top:305.00px;width:48.00px;height:1.00px;background:rgba(0,0,0,0.19)"></div>
<div style="left:94.00px;top:305.00px;width:39.00px;height:1.00px;background:rgba(0,0,0,0.19)"></div>
<div style="left:133.00px;top:305.00px;width:37.00px;height:1.00px;background:rgba(0,0,0,0.19)"></div>
<div style="left:447.00px;top:305.00px;width:26.00px;height:1.00px;background:rgba(0,0,0,0.19)"></div>
<div style="left:770.00px;top:305.00px;width:48.00px;height:1.00px;background:rgba(0,0,0,0.19)"></div>
<div class="t" style="left:47.00px;top:264.30px;width:47.00px;height:41.00px;line-height:41.00px;text-align:center;font-size:5.8px;-webkit-text-stroke:0.05px currentColor;color:#1a1ae8;text-decoration:underline;text-decoration-thickness:0.6px;text-underline-offset:0.8px"><span style="position:absolute;left:50%;top:0;text-decoration:underline;text-decoration-thickness:0.6px;text-underline-offset:0.8px;transform:translateX(-50%) scaleX(0.88);transform-origin:50% 50%">NO.201408070001</span></div>
<div class="t" style="left:96.50px;top:264.30px;height:41.00px;line-height:41.00px;text-align:left;font-size:6.1px;color:#000;">客户A</div>
<div class="t" style="left:134.00px;top:264.30px;width:36.00px;height:41.00px;line-height:41.00px;text-align:center;font-size:5.8px;color:#2a9a2a;text-decoration:underline;text-decoration-thickness:0.6px;text-underline-offset:0.8px">[0个附件]</div>
<div class="cb" style="left:458px;top:282px"></div>
<div class="t" style="left:775.00px;top:264.30px;height:41.00px;line-height:41.00px;text-align:left;font-size:6.1px;color:#000;">已</div>
<div style="left:12.00px;top:0.00px;width:1.00px;height:300.00px;background:rgba(0,0,0,0.19)"></div>
<div style="left:46.00px;top:0.00px;width:1.00px;height:300.00px;background:rgba(0,0,0,0.19)"></div>
<div style="left:94.00px;top:0.00px;width:1.00px;height:300.00px;background:rgba(0,0,0,0.19)"></div>
<div style="left:133.00px;top:0.00px;width:1.00px;height:300.00px;background:rgba(0,0,0,0.19)"></div>
<div style="left:170.00px;top:0.00px;width:1.00px;height:300.00px;background:rgba(0,0,0,0.19)"></div>
<div style="left:196.00px;top:0.00px;width:1.00px;height:300.00px;background:rgba(0,0,0,0.19)"></div>
<div style="left:227.00px;top:0.00px;width:1.00px;height:300.00px;background:rgba(0,0,0,0.19)"></div>
<div style="left:259.00px;top:0.00px;width:1.00px;height:300.00px;background:rgba(0,0,0,0.19)"></div>
<div style="left:283.00px;top:0.00px;width:1.00px;height:300.00px;background:rgba(0,0,0,0.19)"></div>
<div style="left:307.00px;top:0.00px;width:1.00px;height:300.00px;background:rgba(0,0,0,0.19)"></div>
<div style="left:331.00px;top:0.00px;width:1.00px;height:300.00px;background:rgba(0,0,0,0.19)"></div>
<div style="left:355.00px;top:0.00px;width:1.00px;height:300.00px;background:rgba(0,0,0,0.19)"></div>
<div style="left:385.00px;top:0.00px;width:1.00px;height:300.00px;background:rgba(0,0,0,0.19)"></div>
<div style="left:414.00px;top:0.00px;width:1.00px;height:300.00px;background:rgba(0,0,0,0.19)"></div>
<div style="left:447.00px;top:0.00px;width:1.00px;height:300.00px;background:rgba(0,0,0,0.19)"></div>
<div style="left:473.00px;top:0.00px;width:1.00px;height:300.00px;background:rgba(0,0,0,0.19)"></div>
<div style="left:512.00px;top:0.00px;width:1.00px;height:300.00px;background:rgba(0,0,0,0.19)"></div>
<div style="left:539.00px;top:0.00px;width:1.00px;height:300.00px;background:rgba(0,0,0,0.19)"></div>
<div style="left:596.00px;top:0.00px;width:1.00px;height:300.00px;background:rgba(0,0,0,0.19)"></div>
<div style="left:653.00px;top:0.00px;width:1.00px;height:300.00px;background:rgba(0,0,0,0.19)"></div>
<div style="left:682.00px;top:0.00px;width:1.00px;height:300.00px;background:rgba(0,0,0,0.19)"></div>
<div style="left:715.00px;top:0.00px;width:1.00px;height:300.00px;background:rgba(0,0,0,0.19)"></div>
<div style="left:734.00px;top:0.00px;width:1.00px;height:300.00px;background:rgba(0,0,0,0.19)"></div>
<div style="left:770.00px;top:0.00px;width:1.00px;height:300.00px;background:rgba(0,0,0,0.19)"></div>
<div class="t" style="left:1.00px;top:0.80px;width:11.00px;height:10.00px;line-height:10.00px;text-align:center;font-size:5.8px;-webkit-text-stroke:0.05px currentColor;color:#222;font-size:6px">1</div>
<div class="t" style="left:171.00px;top:0.30px;width:23.00px;height:10.00px;line-height:10.00px;text-align:right;font-size:6.1px;color:#000;">正常</div>
<div class="t" style="left:229.50px;top:0.30px;height:10.00px;line-height:10.00px;text-align:left;font-size:6.1px;color:#000;">背胶</div>
<div class="ck" style="left:269px;top:3px"></div>
<div class="ck" style="left:293px;top:3px"></div>
<div class="cb" style="left:317px;top:3px"></div>
<div class="cb" style="left:341px;top:3px"></div>
<div class="cb" style="left:429px;top:3px"></div>
<div class="t" style="left:514.50px;top:0.30px;height:10.00px;line-height:10.00px;text-align:left;font-size:6.1px;color:#000;">超级用户</div>
<div class="t" style="left:541.50px;top:0.30px;height:10.00px;line-height:10.00px;text-align:left;font-size:6.1px;color:#000;">未指定</div>
<div class="t" style="left:655.50px;top:0.30px;height:10.00px;line-height:10.00px;text-align:left;font-size:6.1px;color:#000;">室内写真</div>
<div class="t" style="left:684.50px;top:0.30px;height:10.00px;line-height:10.00px;text-align:left;font-size:6.1px;color:#000;">背胶</div>
<div class="t" style="left:716.80px;top:0.30px;height:10.00px;line-height:10.00px;text-align:left;font-size:5.8px;-webkit-text-stroke:0.05px currentColor;color:#222;">12.00</div>
<div class="t" style="left:735.80px;top:0.30px;height:10.00px;line-height:10.00px;text-align:left;font-size:5.8px;-webkit-text-stroke:0.05px currentColor;color:#222;">345.60</div>
<div class="t" style="left:1.00px;top:11.80px;width:11.00px;height:9.00px;line-height:9.00px;text-align:center;font-size:5.8px;-webkit-text-stroke:0.05px currentColor;color:#222;font-size:6px">2</div>
<div class="t" style="left:171.00px;top:11.30px;width:23.00px;height:9.00px;line-height:9.00px;text-align:right;font-size:6.1px;color:#000;">正常</div>
<div class="t" style="left:229.50px;top:11.30px;height:9.00px;line-height:9.00px;text-align:left;font-size:6.1px;color:#000;">灯布</div>
<div class="ck" style="left:269px;top:13px"></div>
<div class="ck" style="left:293px;top:13px"></div>
<div class="cb" style="left:317px;top:13px"></div>
<div class="cb" style="left:341px;top:13px"></div>
<div class="cb" style="left:429px;top:13px"></div>
<div class="t" style="left:514.50px;top:11.30px;height:9.00px;line-height:9.00px;text-align:left;font-size:6.1px;color:#000;">超级用户</div>
<div class="t" style="left:541.50px;top:11.30px;height:9.00px;line-height:9.00px;text-align:left;font-size:6.1px;color:#000;">未指定</div>
<div class="t" style="left:655.50px;top:11.30px;height:9.00px;line-height:9.00px;text-align:left;font-size:6.1px;color:#000;">室内写真</div>
<div class="t" style="left:684.50px;top:11.30px;height:9.00px;line-height:9.00px;text-align:left;font-size:6.1px;color:#000;">灯布</div>
<div class="t" style="left:716.80px;top:11.30px;height:9.00px;line-height:9.00px;text-align:left;font-size:5.8px;-webkit-text-stroke:0.05px currentColor;color:#222;">12.00</div>
<div class="t" style="left:735.80px;top:11.30px;height:9.00px;line-height:9.00px;text-align:left;font-size:5.8px;-webkit-text-stroke:0.05px currentColor;color:#222;">280.80</div>
<div class="t" style="left:1.00px;top:21.80px;width:11.00px;height:10.00px;line-height:10.00px;text-align:center;font-size:5.8px;-webkit-text-stroke:0.05px currentColor;color:#222;font-size:6px">3</div>
<div class="t" style="left:171.00px;top:21.30px;width:23.00px;height:10.00px;line-height:10.00px;text-align:right;font-size:6.1px;color:#000;">正常</div>
<div class="t" style="left:229.50px;top:21.30px;height:10.00px;line-height:10.00px;text-align:left;font-size:6.1px;color:#000;">写真布</div>
<div class="ck" style="left:269px;top:24px"></div>
<div class="ck" style="left:293px;top:24px"></div>
<div class="cb" style="left:317px;top:24px"></div>
<div class="cb" style="left:341px;top:24px"></div>
<div class="ck" style="left:368px;top:24px"></div>
<div class="cb" style="left:398px;top:24px"></div>
<div class="cb" style="left:429px;top:24px"></div>
<div class="t" style="left:475.00px;top:21.30px;height:10.00px;line-height:10.00px;text-align:left;font-size:6.1px;color:#000;">中国广告公司</div>
<div class="t" style="left:514.50px;top:21.30px;height:10.00px;line-height:10.00px;text-align:left;font-size:6.1px;color:#000;">超级用户</div>
<div class="t" style="left:541.50px;top:21.30px;height:10.00px;line-height:10.00px;text-align:left;font-size:6.1px;color:#000;">未指定</div>
<div class="t" style="left:655.50px;top:21.30px;height:10.00px;line-height:10.00px;text-align:left;font-size:6.1px;color:#000;">室内写真</div>
<div class="t" style="left:684.50px;top:21.30px;height:10.00px;line-height:10.00px;text-align:left;font-size:6.1px;color:#000;">写真布</div>
<div class="t" style="left:716.80px;top:21.30px;height:10.00px;line-height:10.00px;text-align:left;font-size:5.8px;-webkit-text-stroke:0.05px currentColor;color:#222;">12.00</div>
<div class="t" style="left:735.80px;top:21.30px;height:10.00px;line-height:10.00px;text-align:left;font-size:5.8px;-webkit-text-stroke:0.05px currentColor;color:#222;">540.00</div>
<div class="t" style="left:1.00px;top:32.80px;width:11.00px;height:9.00px;line-height:9.00px;text-align:center;font-size:5.8px;-webkit-text-stroke:0.05px currentColor;color:#222;font-size:6px">4</div>
<div class="t" style="left:171.00px;top:32.30px;width:23.00px;height:9.00px;line-height:9.00px;text-align:right;font-size:6.1px;color:#000;">正常</div>
<div class="t" style="left:229.50px;top:32.30px;height:9.00px;line-height:9.00px;text-align:left;font-size:6.1px;color:#000;">车身贴</div>
<div class="ck" style="left:269px;top:34px"></div>
<div class="ck" style="left:293px;top:34px"></div>
<div class="cb" style="left:317px;top:34px"></div>
<div class="cb" style="left:341px;top:34px"></div>
<div class="ck" style="left:368px;top:34px"></div>
<div class="cb" style="left:398px;top:34px"></div>
<div class="cb" style="left:429px;top:34px"></div>
<div class="t" style="left:475.00px;top:32.30px;height:9.00px;line-height:9.00px;text-align:left;font-size:6.1px;color:#000;">中国广告公司</div>
<div class="t" style="left:514.50px;top:32.30px;height:9.00px;line-height:9.00px;text-align:left;font-size:6.1px;color:#000;">超级用户</div>
<div class="t" style="left:541.50px;top:32.30px;height:9.00px;line-height:9.00px;text-align:left;font-size:6.1px;color:#000;">未指定</div>
<div class="t" style="left:655.50px;top:32.30px;height:9.00px;line-height:9.00px;text-align:left;font-size:6.1px;color:#000;">室内写真</div>
<div class="t" style="left:684.50px;top:32.30px;height:9.00px;line-height:9.00px;text-align:left;font-size:6.1px;color:#000;">车身贴</div>
<div class="t" style="left:716.80px;top:32.30px;height:9.00px;line-height:9.00px;text-align:left;font-size:5.8px;-webkit-text-stroke:0.05px currentColor;color:#222;">12.00</div>
<div class="t" style="left:735.80px;top:32.30px;height:9.00px;line-height:9.00px;text-align:left;font-size:5.8px;-webkit-text-stroke:0.05px currentColor;color:#222;">496.80</div>
<div class="t" style="left:1.00px;top:42.80px;width:11.00px;height:10.00px;line-height:10.00px;text-align:center;font-size:5.8px;-webkit-text-stroke:0.05px currentColor;color:#222;font-size:6px">5</div>
<div class="t" style="left:171.00px;top:42.30px;width:23.00px;height:10.00px;line-height:10.00px;text-align:right;font-size:6.1px;color:#000;">正常</div>
<div class="t" style="left:229.50px;top:42.30px;height:10.00px;line-height:10.00px;text-align:left;font-size:6.1px;color:#000;">背胶</div>
<div class="cb" style="left:269px;top:45px"></div>
<div class="cb" style="left:293px;top:45px"></div>
<div class="ck" style="left:317px;top:45px"></div>
<div class="cb" style="left:341px;top:45px"></div>
<div class="cb" style="left:429px;top:45px"></div>
<div class="t" style="left:514.50px;top:42.30px;height:10.00px;line-height:10.00px;text-align:left;font-size:6.1px;color:#000;">超级用户</div>
<div class="t" style="left:541.50px;top:42.30px;height:10.00px;line-height:10.00px;text-align:left;font-size:6.1px;color:#000;">未指定</div>
<div class="t" style="left:655.50px;top:42.30px;height:10.00px;line-height:10.00px;text-align:left;font-size:6.1px;color:#000;">室内写真</div>
<div class="t" style="left:684.50px;top:42.30px;height:10.00px;line-height:10.00px;text-align:left;font-size:6.1px;color:#000;">背胶</div>
<div class="t" style="left:716.80px;top:42.30px;height:10.00px;line-height:10.00px;text-align:left;font-size:5.8px;-webkit-text-stroke:0.05px currentColor;color:#222;">12.00</div>
<div class="t" style="left:735.80px;top:42.30px;height:10.00px;line-height:10.00px;text-align:left;font-size:5.8px;-webkit-text-stroke:0.05px currentColor;color:#222;">345.60</div>
<div class="t" style="left:1.00px;top:53.80px;width:11.00px;height:9.00px;line-height:9.00px;text-align:center;font-size:5.8px;-webkit-text-stroke:0.05px currentColor;color:#222;font-size:6px">6</div>
<div class="t" style="left:171.00px;top:53.30px;width:23.00px;height:9.00px;line-height:9.00px;text-align:right;font-size:6.1px;color:#000;">正常</div>
<div class="t" style="left:229.50px;top:53.30px;height:9.00px;line-height:9.00px;text-align:left;font-size:6.1px;color:#000;">灯布</div>
<div class="cb" style="left:269px;top:55px"></div>
<div class="cb" style="left:293px;top:55px"></div>
<div class="ck" style="left:317px;top:55px"></div>
<div class="cb" style="left:341px;top:55px"></div>
<div class="cb" style="left:429px;top:55px"></div>
<div class="t" style="left:514.50px;top:53.30px;height:9.00px;line-height:9.00px;text-align:left;font-size:6.1px;color:#000;">超级用户</div>
<div class="t" style="left:541.50px;top:53.30px;height:9.00px;line-height:9.00px;text-align:left;font-size:6.1px;color:#000;">未指定</div>
<div class="t" style="left:655.50px;top:53.30px;height:9.00px;line-height:9.00px;text-align:left;font-size:6.1px;color:#000;">室内写真</div>
<div class="t" style="left:684.50px;top:53.30px;height:9.00px;line-height:9.00px;text-align:left;font-size:6.1px;color:#000;">灯布</div>
<div class="t" style="left:716.80px;top:53.30px;height:9.00px;line-height:9.00px;text-align:left;font-size:5.8px;-webkit-text-stroke:0.05px currentColor;color:#222;">12.00</div>
<div class="t" style="left:735.80px;top:53.30px;height:9.00px;line-height:9.00px;text-align:left;font-size:5.8px;-webkit-text-stroke:0.05px currentColor;color:#222;">280.80</div>
<div class="t" style="left:1.00px;top:63.80px;width:11.00px;height:10.00px;line-height:10.00px;text-align:center;font-size:5.8px;-webkit-text-stroke:0.05px currentColor;color:#222;font-size:6px">7</div>
<div class="t" style="left:171.00px;top:63.30px;width:23.00px;height:10.00px;line-height:10.00px;text-align:right;font-size:6.1px;color:#000;">正常</div>
<div class="t" style="left:229.50px;top:63.30px;height:10.00px;line-height:10.00px;text-align:left;font-size:6.1px;color:#000;">写真布</div>
<div class="cb" style="left:269px;top:66px"></div>
<div class="cb" style="left:293px;top:66px"></div>
<div class="ck" style="left:317px;top:66px"></div>
<div class="cb" style="left:341px;top:66px"></div>
<div class="ck" style="left:368px;top:66px"></div>
<div class="cb" style="left:398px;top:66px"></div>
<div class="cb" style="left:429px;top:66px"></div>
<div class="t" style="left:475.00px;top:63.30px;height:10.00px;line-height:10.00px;text-align:left;font-size:6.1px;color:#000;">中国广告公司</div>
<div class="t" style="left:514.50px;top:63.30px;height:10.00px;line-height:10.00px;text-align:left;font-size:6.1px;color:#000;">超级用户</div>
<div class="t" style="left:541.50px;top:63.30px;height:10.00px;line-height:10.00px;text-align:left;font-size:6.1px;color:#000;">未指定</div>
<div class="t" style="left:655.50px;top:63.30px;height:10.00px;line-height:10.00px;text-align:left;font-size:6.1px;color:#000;">室内写真</div>
<div class="t" style="left:684.50px;top:63.30px;height:10.00px;line-height:10.00px;text-align:left;font-size:6.1px;color:#000;">写真布</div>
<div class="t" style="left:716.80px;top:63.30px;height:10.00px;line-height:10.00px;text-align:left;font-size:5.8px;-webkit-text-stroke:0.05px currentColor;color:#222;">12.00</div>
<div class="t" style="left:735.80px;top:63.30px;height:10.00px;line-height:10.00px;text-align:left;font-size:5.8px;-webkit-text-stroke:0.05px currentColor;color:#222;">540.00</div>
<div class="t" style="left:1.00px;top:74.80px;width:11.00px;height:9.00px;line-height:9.00px;text-align:center;font-size:5.8px;-webkit-text-stroke:0.05px currentColor;color:#222;font-size:6px">8</div>
<div class="t" style="left:171.00px;top:74.30px;width:23.00px;height:9.00px;line-height:9.00px;text-align:right;font-size:6.1px;color:#000;">正常</div>
<div class="t" style="left:229.50px;top:74.30px;height:9.00px;line-height:9.00px;text-align:left;font-size:6.1px;color:#000;">车身贴</div>
<div class="cb" style="left:269px;top:76px"></div>
<div class="cb" style="left:293px;top:76px"></div>
<div class="ck" style="left:317px;top:76px"></div>
<div class="cb" style="left:341px;top:76px"></div>
<div class="ck" style="left:368px;top:76px"></div>
<div class="cb" style="left:398px;top:76px"></div>
<div class="cb" style="left:429px;top:76px"></div>
<div class="t" style="left:475.00px;top:74.30px;height:9.00px;line-height:9.00px;text-align:left;font-size:6.1px;color:#000;">中国广告公司</div>
<div class="t" style="left:514.50px;top:74.30px;height:9.00px;line-height:9.00px;text-align:left;font-size:6.1px;color:#000;">超级用户</div>
<div class="t" style="left:541.50px;top:74.30px;height:9.00px;line-height:9.00px;text-align:left;font-size:6.1px;color:#000;">未指定</div>
<div class="t" style="left:655.50px;top:74.30px;height:9.00px;line-height:9.00px;text-align:left;font-size:6.1px;color:#000;">室内写真</div>
<div class="t" style="left:684.50px;top:74.30px;height:9.00px;line-height:9.00px;text-align:left;font-size:6.1px;color:#000;">车身贴</div>
<div class="t" style="left:716.80px;top:74.30px;height:9.00px;line-height:9.00px;text-align:left;font-size:5.8px;-webkit-text-stroke:0.05px currentColor;color:#222;">12.00</div>
<div class="t" style="left:735.80px;top:74.30px;height:9.00px;line-height:9.00px;text-align:left;font-size:5.8px;-webkit-text-stroke:0.05px currentColor;color:#222;">496.80</div>
<div class="t" style="left:1.00px;top:84.80px;width:11.00px;height:10.00px;line-height:10.00px;text-align:center;font-size:5.8px;-webkit-text-stroke:0.05px currentColor;color:#222;font-size:6px">9</div>
<div class="t" style="left:171.00px;top:84.30px;width:23.00px;height:10.00px;line-height:10.00px;text-align:right;font-size:6.1px;color:#000;">正常</div>
<div class="t" style="left:229.50px;top:84.30px;height:10.00px;line-height:10.00px;text-align:left;font-size:6.1px;color:#000;">背胶</div>
<div class="cb" style="left:269px;top:87px"></div>
<div class="cb" style="left:293px;top:87px"></div>
<div class="ck" style="left:317px;top:87px"></div>
<div class="cb" style="left:341px;top:87px"></div>
<div class="cb" style="left:429px;top:87px"></div>
<div class="t" style="left:514.50px;top:84.30px;height:10.00px;line-height:10.00px;text-align:left;font-size:6.1px;color:#000;">超级用户</div>
<div class="t" style="left:541.50px;top:84.30px;height:10.00px;line-height:10.00px;text-align:left;font-size:6.1px;color:#000;">未指定</div>
<div class="t" style="left:655.50px;top:84.30px;height:10.00px;line-height:10.00px;text-align:left;font-size:6.1px;color:#000;">室内写真</div>
<div class="t" style="left:684.50px;top:84.30px;height:10.00px;line-height:10.00px;text-align:left;font-size:6.1px;color:#000;">背胶</div>
<div class="t" style="left:716.80px;top:84.30px;height:10.00px;line-height:10.00px;text-align:left;font-size:5.8px;-webkit-text-stroke:0.05px currentColor;color:#222;">12.00</div>
<div class="t" style="left:735.80px;top:84.30px;height:10.00px;line-height:10.00px;text-align:left;font-size:5.8px;-webkit-text-stroke:0.05px currentColor;color:#222;">345.60</div>
<div class="t" style="left:1.00px;top:95.80px;width:11.00px;height:9.00px;line-height:9.00px;text-align:center;font-size:5.8px;-webkit-text-stroke:0.05px currentColor;color:#222;font-size:6px">10</div>
<div class="t" style="left:171.00px;top:95.30px;width:23.00px;height:9.00px;line-height:9.00px;text-align:right;font-size:6.1px;color:#000;">正常</div>
<div class="t" style="left:229.50px;top:95.30px;height:9.00px;line-height:9.00px;text-align:left;font-size:6.1px;color:#000;">灯布</div>
<div class="cb" style="left:269px;top:97px"></div>
<div class="cb" style="left:293px;top:97px"></div>
<div class="ck" style="left:317px;top:97px"></div>
<div class="cb" style="left:341px;top:97px"></div>
<div class="cb" style="left:429px;top:97px"></div>
<div class="t" style="left:514.50px;top:95.30px;height:9.00px;line-height:9.00px;text-align:left;font-size:6.1px;color:#000;">超级用户</div>
<div class="t" style="left:541.50px;top:95.30px;height:9.00px;line-height:9.00px;text-align:left;font-size:6.1px;color:#000;">未指定</div>
<div class="t" style="left:655.50px;top:95.30px;height:9.00px;line-height:9.00px;text-align:left;font-size:6.1px;color:#000;">室内写真</div>
<div class="t" style="left:684.50px;top:95.30px;height:9.00px;line-height:9.00px;text-align:left;font-size:6.1px;color:#000;">灯布</div>
<div class="t" style="left:716.80px;top:95.30px;height:9.00px;line-height:9.00px;text-align:left;font-size:5.8px;-webkit-text-stroke:0.05px currentColor;color:#222;">12.00</div>
<div class="t" style="left:735.80px;top:95.30px;height:9.00px;line-height:9.00px;text-align:left;font-size:5.8px;-webkit-text-stroke:0.05px currentColor;color:#222;">280.80</div>
<div class="t" style="left:1.00px;top:105.80px;width:11.00px;height:10.00px;line-height:10.00px;text-align:center;font-size:5.8px;-webkit-text-stroke:0.05px currentColor;color:#222;font-size:6px">11</div>
<div class="t" style="left:171.00px;top:105.30px;width:23.00px;height:10.00px;line-height:10.00px;text-align:right;font-size:6.1px;color:#000;">正常</div>
<div class="t" style="left:229.50px;top:105.30px;height:10.00px;line-height:10.00px;text-align:left;font-size:6.1px;color:#000;">写真布</div>
<div class="cb" style="left:269px;top:108px"></div>
<div class="cb" style="left:293px;top:108px"></div>
<div class="ck" style="left:317px;top:108px"></div>
<div class="cb" style="left:341px;top:108px"></div>
<div class="ck" style="left:368px;top:108px"></div>
<div class="cb" style="left:398px;top:108px"></div>
<div class="cb" style="left:429px;top:108px"></div>
<div class="t" style="left:475.00px;top:105.30px;height:10.00px;line-height:10.00px;text-align:left;font-size:6.1px;color:#000;">中国广告公司</div>
<div class="t" style="left:514.50px;top:105.30px;height:10.00px;line-height:10.00px;text-align:left;font-size:6.1px;color:#000;">超级用户</div>
<div class="t" style="left:541.50px;top:105.30px;height:10.00px;line-height:10.00px;text-align:left;font-size:6.1px;color:#000;">未指定</div>
<div class="t" style="left:655.50px;top:105.30px;height:10.00px;line-height:10.00px;text-align:left;font-size:6.1px;color:#000;">室内写真</div>
<div class="t" style="left:684.50px;top:105.30px;height:10.00px;line-height:10.00px;text-align:left;font-size:6.1px;color:#000;">写真布</div>
<div class="t" style="left:716.80px;top:105.30px;height:10.00px;line-height:10.00px;text-align:left;font-size:5.8px;-webkit-text-stroke:0.05px currentColor;color:#222;">12.00</div>
<div class="t" style="left:735.80px;top:105.30px;height:10.00px;line-height:10.00px;text-align:left;font-size:5.8px;-webkit-text-stroke:0.05px currentColor;color:#222;">540.00</div>
<div class="t" style="left:1.00px;top:116.80px;width:11.00px;height:9.00px;line-height:9.00px;text-align:center;font-size:5.8px;-webkit-text-stroke:0.05px currentColor;color:#222;font-size:6px">12</div>
<div class="t" style="left:171.00px;top:116.30px;width:23.00px;height:9.00px;line-height:9.00px;text-align:right;font-size:6.1px;color:#000;">正常</div>
<div class="t" style="left:229.50px;top:116.30px;height:9.00px;line-height:9.00px;text-align:left;font-size:6.1px;color:#000;">车身贴</div>
<div class="cb" style="left:269px;top:118px"></div>
<div class="cb" style="left:293px;top:118px"></div>
<div class="ck" style="left:317px;top:118px"></div>
<div class="cb" style="left:341px;top:118px"></div>
<div class="ck" style="left:368px;top:118px"></div>
<div class="cb" style="left:398px;top:118px"></div>
<div class="cb" style="left:429px;top:118px"></div>
<div class="t" style="left:475.00px;top:116.30px;height:9.00px;line-height:9.00px;text-align:left;font-size:6.1px;color:#000;">中国广告公司</div>
<div class="t" style="left:514.50px;top:116.30px;height:9.00px;line-height:9.00px;text-align:left;font-size:6.1px;color:#000;">超级用户</div>
<div class="t" style="left:541.50px;top:116.30px;height:9.00px;line-height:9.00px;text-align:left;font-size:6.1px;color:#000;">未指定</div>
<div class="t" style="left:655.50px;top:116.30px;height:9.00px;line-height:9.00px;text-align:left;font-size:6.1px;color:#000;">室内写真</div>
<div class="t" style="left:684.50px;top:116.30px;height:9.00px;line-height:9.00px;text-align:left;font-size:6.1px;color:#000;">车身贴</div>
<div class="t" style="left:716.80px;top:116.30px;height:9.00px;line-height:9.00px;text-align:left;font-size:5.8px;-webkit-text-stroke:0.05px currentColor;color:#222;">12.00</div>
<div class="t" style="left:735.80px;top:116.30px;height:9.00px;line-height:9.00px;text-align:left;font-size:5.8px;-webkit-text-stroke:0.05px currentColor;color:#222;">496.80</div>
<div class="t" style="left:1.00px;top:126.80px;width:11.00px;height:10.00px;line-height:10.00px;text-align:center;font-size:5.8px;-webkit-text-stroke:0.05px currentColor;color:#222;font-size:6px">13</div>
<div class="t" style="left:171.00px;top:126.30px;width:23.00px;height:10.00px;line-height:10.00px;text-align:right;font-size:6.1px;color:#000;">正常</div>
<div class="t" style="left:229.50px;top:126.30px;height:10.00px;line-height:10.00px;text-align:left;font-size:6.1px;color:#000;">背胶</div>
<div class="cb" style="left:269px;top:129px"></div>
<div class="cb" style="left:293px;top:129px"></div>
<div class="ck" style="left:317px;top:129px"></div>
<div class="cb" style="left:341px;top:129px"></div>
<div class="cb" style="left:429px;top:129px"></div>
<div class="t" style="left:514.50px;top:126.30px;height:10.00px;line-height:10.00px;text-align:left;font-size:6.1px;color:#000;">超级用户</div>
<div class="t" style="left:541.50px;top:126.30px;height:10.00px;line-height:10.00px;text-align:left;font-size:6.1px;color:#000;">未指定</div>
<div class="t" style="left:655.50px;top:126.30px;height:10.00px;line-height:10.00px;text-align:left;font-size:6.1px;color:#000;">室内写真</div>
<div class="t" style="left:684.50px;top:126.30px;height:10.00px;line-height:10.00px;text-align:left;font-size:6.1px;color:#000;">背胶</div>
<div class="t" style="left:716.80px;top:126.30px;height:10.00px;line-height:10.00px;text-align:left;font-size:5.8px;-webkit-text-stroke:0.05px currentColor;color:#222;">12.00</div>
<div class="t" style="left:735.80px;top:126.30px;height:10.00px;line-height:10.00px;text-align:left;font-size:5.8px;-webkit-text-stroke:0.05px currentColor;color:#222;">345.60</div>
<div class="t" style="left:1.00px;top:137.80px;width:11.00px;height:10.00px;line-height:10.00px;text-align:center;font-size:5.8px;-webkit-text-stroke:0.05px currentColor;color:#222;font-size:6px">14</div>
<div class="t" style="left:171.00px;top:137.30px;width:23.00px;height:10.00px;line-height:10.00px;text-align:right;font-size:6.1px;color:#000;">正常</div>
<div class="t" style="left:229.50px;top:137.30px;height:10.00px;line-height:10.00px;text-align:left;font-size:6.1px;color:#000;">灯布</div>
<div class="cb" style="left:269px;top:140px"></div>
<div class="cb" style="left:293px;top:140px"></div>
<div class="ck" style="left:317px;top:140px"></div>
<div class="cb" style="left:341px;top:140px"></div>
<div class="cb" style="left:429px;top:140px"></div>
<div class="t" style="left:514.50px;top:137.30px;height:10.00px;line-height:10.00px;text-align:left;font-size:6.1px;color:#000;">超级用户</div>
<div class="t" style="left:541.50px;top:137.30px;height:10.00px;line-height:10.00px;text-align:left;font-size:6.1px;color:#000;">未指定</div>
<div class="t" style="left:655.50px;top:137.30px;height:10.00px;line-height:10.00px;text-align:left;font-size:6.1px;color:#000;">室内写真</div>
<div class="t" style="left:684.50px;top:137.30px;height:10.00px;line-height:10.00px;text-align:left;font-size:6.1px;color:#000;">灯布</div>
<div class="t" style="left:716.80px;top:137.30px;height:10.00px;line-height:10.00px;text-align:left;font-size:5.8px;-webkit-text-stroke:0.05px currentColor;color:#222;">12.00</div>
<div class="t" style="left:735.80px;top:137.30px;height:10.00px;line-height:10.00px;text-align:left;font-size:5.8px;-webkit-text-stroke:0.05px currentColor;color:#222;">280.80</div>
<div class="t" style="left:1.00px;top:148.80px;width:11.00px;height:9.00px;line-height:9.00px;text-align:center;font-size:5.8px;-webkit-text-stroke:0.05px currentColor;color:#222;font-size:6px">15</div>
<div class="t" style="left:171.00px;top:148.30px;width:23.00px;height:9.00px;line-height:9.00px;text-align:right;font-size:6.1px;color:#000;">正常</div>
<div class="t" style="left:229.50px;top:148.30px;height:9.00px;line-height:9.00px;text-align:left;font-size:6.1px;color:#000;">写真布</div>
<div class="cb" style="left:269px;top:150px"></div>
<div class="cb" style="left:293px;top:150px"></div>
<div class="ck" style="left:317px;top:150px"></div>
<div class="cb" style="left:341px;top:150px"></div>
<div class="ck" style="left:368px;top:150px"></div>
<div class="cb" style="left:398px;top:150px"></div>
<div class="cb" style="left:429px;top:150px"></div>
<div class="t" style="left:475.00px;top:148.30px;height:9.00px;line-height:9.00px;text-align:left;font-size:6.1px;color:#000;">中国广告公司</div>
<div class="t" style="left:514.50px;top:148.30px;height:9.00px;line-height:9.00px;text-align:left;font-size:6.1px;color:#000;">超级用户</div>
<div class="t" style="left:541.50px;top:148.30px;height:9.00px;line-height:9.00px;text-align:left;font-size:6.1px;color:#000;">未指定</div>
<div class="t" style="left:655.50px;top:148.30px;height:9.00px;line-height:9.00px;text-align:left;font-size:6.1px;color:#000;">室内写真</div>
<div class="t" style="left:684.50px;top:148.30px;height:9.00px;line-height:9.00px;text-align:left;font-size:6.1px;color:#000;">写真布</div>
<div class="t" style="left:716.80px;top:148.30px;height:9.00px;line-height:9.00px;text-align:left;font-size:5.8px;-webkit-text-stroke:0.05px currentColor;color:#222;">12.00</div>
<div class="t" style="left:735.80px;top:148.30px;height:9.00px;line-height:9.00px;text-align:left;font-size:5.8px;-webkit-text-stroke:0.05px currentColor;color:#222;">540.00</div>
<div class="t" style="left:1.00px;top:158.80px;width:11.00px;height:10.00px;line-height:10.00px;text-align:center;font-size:5.8px;-webkit-text-stroke:0.05px currentColor;color:#222;font-size:6px">16</div>
<div class="t" style="left:171.00px;top:158.30px;width:23.00px;height:10.00px;line-height:10.00px;text-align:right;font-size:6.1px;color:#000;">正常</div>
<div class="t" style="left:229.50px;top:158.30px;height:10.00px;line-height:10.00px;text-align:left;font-size:6.1px;color:#000;">车身贴</div>
<div class="cb" style="left:269px;top:161px"></div>
<div class="cb" style="left:293px;top:161px"></div>
<div class="ck" style="left:317px;top:161px"></div>
<div class="cb" style="left:341px;top:161px"></div>
<div class="ck" style="left:368px;top:161px"></div>
<div class="cb" style="left:398px;top:161px"></div>
<div class="cb" style="left:429px;top:161px"></div>
<div class="t" style="left:475.00px;top:158.30px;height:10.00px;line-height:10.00px;text-align:left;font-size:6.1px;color:#000;">中国广告公司</div>
<div class="t" style="left:514.50px;top:158.30px;height:10.00px;line-height:10.00px;text-align:left;font-size:6.1px;color:#000;">超级用户</div>
<div class="t" style="left:541.50px;top:158.30px;height:10.00px;line-height:10.00px;text-align:left;font-size:6.1px;color:#000;">未指定</div>
<div class="t" style="left:655.50px;top:158.30px;height:10.00px;line-height:10.00px;text-align:left;font-size:6.1px;color:#000;">室内写真</div>
<div class="t" style="left:684.50px;top:158.30px;height:10.00px;line-height:10.00px;text-align:left;font-size:6.1px;color:#000;">车身贴</div>
<div class="t" style="left:716.80px;top:158.30px;height:10.00px;line-height:10.00px;text-align:left;font-size:5.8px;-webkit-text-stroke:0.05px currentColor;color:#222;">12.00</div>
<div class="t" style="left:735.80px;top:158.30px;height:10.00px;line-height:10.00px;text-align:left;font-size:5.8px;-webkit-text-stroke:0.05px currentColor;color:#222;">496.80</div>
<div class="t" style="left:1.00px;top:169.80px;width:11.00px;height:9.00px;line-height:9.00px;text-align:center;font-size:5.8px;-webkit-text-stroke:0.05px currentColor;color:#222;font-size:6px">17</div>
<div class="t" style="left:171.00px;top:169.30px;width:23.00px;height:9.00px;line-height:9.00px;text-align:right;font-size:6.1px;color:#000;">正常</div>
<div class="t" style="left:229.50px;top:169.30px;height:9.00px;line-height:9.00px;text-align:left;font-family:'Liberation Serif',serif;font-size:6.9px;color:#222;letter-spacing:0px">c6eb715518</div>
<div class="cb" style="left:269px;top:171px"></div>
<div class="cb" style="left:293px;top:171px"></div>
<div class="cb" style="left:317px;top:171px"></div>
<div class="cb" style="left:341px;top:171px"></div>
<div class="ck" style="left:368px;top:171px"></div>
<div class="cb" style="left:398px;top:171px"></div>
<div class="cb" style="left:429px;top:171px"></div>
<div class="t" style="left:475.00px;top:169.30px;height:9.00px;line-height:9.00px;text-align:left;font-size:6.1px;color:#000;">中国广告公司</div>
<div class="t" style="left:514.50px;top:169.30px;height:9.00px;line-height:9.00px;text-align:left;font-size:6.1px;color:#000;">超级用户</div>
<div class="t" style="left:541.50px;top:169.30px;height:9.00px;line-height:9.00px;text-align:left;font-size:6.1px;color:#000;">未指定</div>
<div class="t" style="left:655.50px;top:169.30px;height:9.00px;line-height:9.00px;text-align:left;font-size:6.1px;color:#000;">户外喷绘</div>
<div class="t" style="left:684.50px;top:169.30px;height:9.00px;line-height:9.00px;text-align:left;font-size:6.1px;color:#000;">大型海报</div>
<div class="t" style="left:716.80px;top:169.30px;height:9.00px;line-height:9.00px;text-align:left;font-size:5.8px;-webkit-text-stroke:0.05px currentColor;color:#222;">1.00</div>
<div class="t" style="left:735.80px;top:169.30px;height:9.00px;line-height:9.00px;text-align:left;font-size:5.8px;-webkit-text-stroke:0.05px currentColor;color:#222;">0.09</div>
<svg style="position:absolute;left:204px;top:168.5px" width="16" height="10" viewBox="0 0 16 10"><rect x="0" y="0" width="16" height="10" fill="#f4f8fb"/><rect x="5.5" y="0.3" width="10.5" height="6.5" fill="#0a1a3a"/><rect x="6" y="0.5" width="4" height="3" fill="#2a5ab0"/><path d="M7 4.5 L9 2 L11 4 L13 2.5" stroke="#e8eef8" stroke-width="1.1" fill="none"/><path d="M11.5 5.5 Q14 4 15.5 4.5 L15.5 6.5 L11 6.5z" fill="#d89070"/><path d="M1.5 4 Q3 2.5 4.5 3.5" stroke="#e0a080" stroke-width="1" fill="none"/><circle cx="1.3" cy="6.5" r="0.6" fill="#222"/><rect x="2" y="7.3" width="14" height="0.9" fill="#ffffff"/><rect x="3" y="8.3" width="13" height="1.4" fill="#2a58b8"/></svg>
<div class="t" style="left:1.00px;top:179.80px;width:11.00px;height:10.00px;line-height:10.00px;text-align:center;font-size:5.8px;-webkit-text-stroke:0.05px currentColor;color:#222;font-size:6px">18</div>
<div class="t" style="left:171.00px;top:179.30px;width:23.00px;height:10.00px;line-height:10.00px;text-align:right;font-size:6.1px;color:#000;">正常</div>
<div class="t" style="left:229.50px;top:179.30px;height:10.00px;line-height:10.00px;text-align:left;font-size:6.1px;color:#000;">背胶</div>
<div class="ck" style="left:269px;top:182px"></div>
<div class="ck" style="left:293px;top:182px"></div>
<div class="cb" style="left:317px;top:182px"></div>
<div class="ck" style="left:341px;top:182px"></div>
<div class="cb" style="left:429px;top:182px"></div>
<div class="t" style="left:514.50px;top:179.30px;height:10.00px;line-height:10.00px;text-align:left;font-size:6.1px;color:#000;">超级用户</div>
<div class="t" style="left:541.50px;top:179.30px;height:10.00px;line-height:10.00px;text-align:left;font-size:6.1px;color:#000;">未指定</div>
<div class="t" style="left:598.50px;top:179.30px;height:10.00px;line-height:10.00px;text-align:left;font-size:5.8px;-webkit-text-stroke:0.05px currentColor;color:#222;">2014-08-07 00:00</div>
<div class="t" style="left:655.50px;top:179.30px;height:10.00px;line-height:10.00px;text-align:left;font-size:6.1px;color:#000;">室内写真</div>
<div class="t" style="left:684.50px;top:179.30px;height:10.00px;line-height:10.00px;text-align:left;font-size:6.1px;color:#000;">背胶</div>
<div class="t" style="left:716.80px;top:179.30px;height:10.00px;line-height:10.00px;text-align:left;font-size:5.8px;-webkit-text-stroke:0.05px currentColor;color:#222;">12.00</div>
<div class="t" style="left:735.80px;top:179.30px;height:10.00px;line-height:10.00px;text-align:left;font-size:5.8px;-webkit-text-stroke:0.05px currentColor;color:#222;">345.60</div>
<div class="t" style="left:1.00px;top:190.80px;width:11.00px;height:9.00px;line-height:9.00px;text-align:center;font-size:5.8px;-webkit-text-stroke:0.05px currentColor;color:#222;font-size:6px">19</div>
<div class="t" style="left:171.00px;top:190.30px;width:23.00px;height:9.00px;line-height:9.00px;text-align:right;font-size:6.1px;color:#000;">正常</div>
<div class="t" style="left:229.50px;top:190.30px;height:9.00px;line-height:9.00px;text-align:left;font-size:6.1px;color:#000;">灯布</div>
<div class="cb" style="left:269px;top:192px"></div>
<div class="ck" style="left:293px;top:192px"></div>
<div class="cb" style="left:317px;top:192px"></div>
<div class="ck" style="left:341px;top:192px"></div>
<div class="cb" style="left:429px;top:192px"></div>
<div class="t" style="left:514.50px;top:190.30px;height:9.00px;line-height:9.00px;text-align:left;font-size:6.1px;color:#000;">超级用户</div>
<div class="t" style="left:541.50px;top:190.30px;height:9.00px;line-height:9.00px;text-align:left;font-size:6.1px;color:#000;">未指定</div>
<div class="t" style="left:598.50px;top:190.30px;height:9.00px;line-height:9.00px;text-align:left;font-size:5.8px;-webkit-text-stroke:0.05px currentColor;color:#222;">2014-08-07 00:00</div>
<div class="t" style="left:655.50px;top:190.30px;height:9.00px;line-height:9.00px;text-align:left;font-size:6.1px;color:#000;">室内写真</div>
<div class="t" style="left:684.50px;top:190.30px;height:9.00px;line-height:9.00px;text-align:left;font-size:6.1px;color:#000;">灯布</div>
<div class="t" style="left:716.80px;top:190.30px;height:9.00px;line-height:9.00px;text-align:left;font-size:5.8px;-webkit-text-stroke:0.05px currentColor;color:#222;">12.00</div>
<div class="t" style="left:735.80px;top:190.30px;height:9.00px;line-height:9.00px;text-align:left;font-size:5.8px;-webkit-text-stroke:0.05px currentColor;color:#222;">280.80</div>
<div class="t" style="left:1.00px;top:200.80px;width:11.00px;height:10.00px;line-height:10.00px;text-align:center;font-size:5.8px;-webkit-text-stroke:0.05px currentColor;color:#222;font-size:6px">20</div>
<div class="t" style="left:171.00px;top:200.30px;width:23.00px;height:10.00px;line-height:10.00px;text-align:right;font-size:6.1px;color:#000;">正常</div>
<div class="t" style="left:229.50px;top:200.30px;height:10.00px;line-height:10.00px;text-align:left;font-size:6.1px;color:#000;">写真布</div>
<div class="cb" style="left:269px;top:203px"></div>
<div class="cb" style="left:293px;top:203px"></div>
<div class="cb" style="left:317px;top:203px"></div>
<div class="ck" style="left:341px;top:203px"></div>
<div class="ck" style="left:368px;top:203px"></div>
<div class="cb" style="left:398px;top:203px"></div>
<div class="cb" style="left:429px;top:203px"></div>
<div class="t" style="left:475.00px;top:200.30px;height:10.00px;line-height:10.00px;text-align:left;font-size:6.1px;color:#000;">中国广告公司</div>
<div class="t" style="left:514.50px;top:200.30px;height:10.00px;line-height:10.00px;text-align:left;font-size:6.1px;color:#000;">超级用户</div>
<div class="t" style="left:541.50px;top:200.30px;height:10.00px;line-height:10.00px;text-align:left;font-size:6.1px;color:#000;">未指定</div>
<div class="t" style="left:598.50px;top:200.30px;height:10.00px;line-height:10.00px;text-align:left;font-size:5.8px;-webkit-text-stroke:0.05px currentColor;color:#222;">2014-08-07 00:00</div>
<div class="t" style="left:655.50px;top:200.30px;height:10.00px;line-height:10.00px;text-align:left;font-size:6.1px;color:#000;">室内写真</div>
<div class="t" style="left:684.50px;top:200.30px;height:10.00px;line-height:10.00px;text-align:left;font-size:6.1px;color:#000;">写真布</div>
<div class="t" style="left:716.80px;top:200.30px;height:10.00px;line-height:10.00px;text-align:left;font-size:5.8px;-webkit-text-stroke:0.05px currentColor;color:#222;">12.00</div>
<div class="t" style="left:735.80px;top:200.30px;height:10.00px;line-height:10.00px;text-align:left;font-size:5.8px;-webkit-text-stroke:0.05px currentColor;color:#222;">540.00</div>
<div class="t" style="left:1.00px;top:211.80px;width:11.00px;height:9.00px;line-height:9.00px;text-align:center;font-size:5.8px;-webkit-text-stroke:0.05px currentColor;color:#222;font-size:6px">21</div>
<div class="t" style="left:171.00px;top:211.30px;width:23.00px;height:9.00px;line-height:9.00px;text-align:right;font-size:6.1px;color:#000;">正常</div>
<div class="t" style="left:229.50px;top:211.30px;height:9.00px;line-height:9.00px;text-align:left;font-size:6.1px;color:#000;">车身贴</div>
<div class="cb" style="left:269px;top:213px"></div>
<div class="cb" style="left:293px;top:213px"></div>
<div class="cb" style="left:317px;top:213px"></div>
<div class="ck" style="left:341px;top:213px"></div>
<div class="ck" style="left:368px;top:213px"></div>
<div class="cb" style="left:398px;top:213px"></div>
<div class="cb" style="left:429px;top:213px"></div>
<div class="t" style="left:475.00px;top:211.30px;height:9.00px;line-height:9.00px;text-align:left;font-size:6.1px;color:#000;">中国广告公司</div>
<div class="t" style="left:514.50px;top:211.30px;height:9.00px;line-height:9.00px;text-align:left;font-size:6.1px;color:#000;">超级用户</div>
<div class="t" style="left:541.50px;top:211.30px;height:9.00px;line-height:9.00px;text-align:left;font-size:6.1px;color:#000;">未指定</div>
<div class="t" style="left:598.50px;top:211.30px;height:9.00px;line-height:9.00px;text-align:left;font-size:5.8px;-webkit-text-stroke:0.05px currentColor;color:#222;">2014-08-07 00:00</div>
<div class="t" style="left:655.50px;top:211.30px;height:9.00px;line-height:9.00px;text-align:left;font-size:6.1px;color:#000;">室内写真</div>
<div class="t" style="left:684.50px;top:211.30px;height:9.00px;line-height:9.00px;text-align:left;font-size:6.1px;color:#000;">车身贴</div>
<div class="t" style="left:716.80px;top:211.30px;height:9.00px;line-height:9.00px;text-align:left;font-size:5.8px;-webkit-text-stroke:0.05px currentColor;color:#222;">12.00</div>
<div class="t" style="left:735.80px;top:211.30px;height:9.00px;line-height:9.00px;text-align:left;font-size:5.8px;-webkit-text-stroke:0.05px currentColor;color:#222;">496.80</div>
<div class="t" style="left:1.00px;top:221.80px;width:11.00px;height:10.00px;line-height:10.00px;text-align:center;font-size:5.8px;-webkit-text-stroke:0.05px currentColor;color:#222;font-size:6px">22</div>
<div class="t" style="left:171.00px;top:221.30px;width:23.00px;height:10.00px;line-height:10.00px;text-align:right;font-size:6.1px;color:#000;">正常</div>
<div class="t" style="left:229.50px;top:221.30px;height:10.00px;line-height:10.00px;text-align:left;font-size:6.1px;color:#000;">背胶</div>
<div class="cb" style="left:269px;top:224px"></div>
<div class="cb" style="left:293px;top:224px"></div>
<div class="cb" style="left:317px;top:224px"></div>
<div class="cb" style="left:341px;top:224px"></div>
<div class="cb" style="left:429px;top:224px"></div>
<div class="t" style="left:514.50px;top:221.30px;height:10.00px;line-height:10.00px;text-align:left;font-size:6.1px;color:#000;">超级用户</div>
<div class="t" style="left:541.50px;top:221.30px;height:10.00px;line-height:10.00px;text-align:left;font-size:6.1px;color:#000;">未指定</div>
<div class="t" style="left:655.50px;top:221.30px;height:10.00px;line-height:10.00px;text-align:left;font-size:6.1px;color:#000;">室内写真</div>
<div class="t" style="left:684.50px;top:221.30px;height:10.00px;line-height:10.00px;text-align:left;font-size:6.1px;color:#000;">背胶</div>
<div class="t" style="left:716.80px;top:221.30px;height:10.00px;line-height:10.00px;text-align:left;font-size:5.8px;-webkit-text-stroke:0.05px currentColor;color:#222;">12.00</div>
<div class="t" style="left:735.80px;top:221.30px;height:10.00px;line-height:10.00px;text-align:left;font-size:5.8px;-webkit-text-stroke:0.05px currentColor;color:#222;">345.60</div>
<div class="t" style="left:1.00px;top:232.80px;width:11.00px;height:9.00px;line-height:9.00px;text-align:center;font-size:5.8px;-webkit-text-stroke:0.05px currentColor;color:#222;font-size:6px">23</div>
<div class="t" style="left:171.00px;top:232.30px;width:23.00px;height:9.00px;line-height:9.00px;text-align:right;font-size:6.1px;color:#000;">正常</div>
<div class="t" style="left:229.50px;top:232.30px;height:9.00px;line-height:9.00px;text-align:left;font-size:6.1px;color:#000;">灯布</div>
<div class="cb" style="left:269px;top:234px"></div>
<div class="cb" style="left:293px;top:234px"></div>
<div class="cb" style="left:317px;top:234px"></div>
<div class="cb" style="left:341px;top:234px"></div>
<div class="cb" style="left:429px;top:234px"></div>
<div class="t" style="left:514.50px;top:232.30px;height:9.00px;line-height:9.00px;text-align:left;font-size:6.1px;color:#000;">超级用户</div>
<div class="t" style="left:541.50px;top:232.30px;height:9.00px;line-height:9.00px;text-align:left;font-size:6.1px;color:#000;">未指定</div>
<div class="t" style="left:655.50px;top:232.30px;height:9.00px;line-height:9.00px;text-align:left;font-size:6.1px;color:#000;">室内写真</div>
<div class="t" style="left:684.50px;top:232.30px;height:9.00px;line-height:9.00px;text-align:left;font-size:6.1px;color:#000;">灯布</div>
<div class="t" style="left:716.80px;top:232.30px;height:9.00px;line-height:9.00px;text-align:left;font-size:5.8px;-webkit-text-stroke:0.05px currentColor;color:#222;">12.00</div>
<div class="t" style="left:735.80px;top:232.30px;height:9.00px;line-height:9.00px;text-align:left;font-size:5.8px;-webkit-text-stroke:0.05px currentColor;color:#222;">280.80</div>
<div class="t" style="left:1.00px;top:242.80px;width:11.00px;height:10.00px;line-height:10.00px;text-align:center;font-size:5.8px;-webkit-text-stroke:0.05px currentColor;color:#222;font-size:6px">24</div>
<div class="t" style="left:171.00px;top:242.30px;width:23.00px;height:10.00px;line-height:10.00px;text-align:right;font-size:6.1px;color:#000;">正常</div>
<div class="t" style="left:229.50px;top:242.30px;height:10.00px;line-height:10.00px;text-align:left;font-size:6.1px;color:#000;">写真布</div>
<div class="cb" style="left:269px;top:245px"></div>
<div class="cb" style="left:293px;top:245px"></div>
<div class="cb" style="left:317px;top:245px"></div>
<div class="cb" style="left:341px;top:245px"></div>
<div class="cb" style="left:429px;top:245px"></div>
<div class="t" style="left:514.50px;top:242.30px;height:10.00px;line-height:10.00px;text-align:left;font-size:6.1px;color:#000;">超级用户</div>
<div class="t" style="left:541.50px;top:242.30px;height:10.00px;line-height:10.00px;text-align:left;font-size:6.1px;color:#000;">未指定</div>
<div class="t" style="left:655.50px;top:242.30px;height:10.00px;line-height:10.00px;text-align:left;font-size:6.1px;color:#000;">室内写真</div>
<div class="t" style="left:684.50px;top:242.30px;height:10.00px;line-height:10.00px;text-align:left;font-size:6.1px;color:#000;">写真布</div>
<div class="t" style="left:716.80px;top:242.30px;height:10.00px;line-height:10.00px;text-align:left;font-size:5.8px;-webkit-text-stroke:0.05px currentColor;color:#222;">12.00</div>
<div class="t" style="left:735.80px;top:242.30px;height:10.00px;line-height:10.00px;text-align:left;font-size:5.8px;-webkit-text-stroke:0.05px currentColor;color:#222;">540.00</div>
<div class="t" style="left:1.00px;top:253.80px;width:11.00px;height:10.00px;line-height:10.00px;text-align:center;font-size:5.8px;-webkit-text-stroke:0.05px currentColor;color:#222;font-size:6px">25</div>
<div class="t" style="left:171.00px;top:253.30px;width:23.00px;height:10.00px;line-height:10.00px;text-align:right;font-size:6.1px;color:#000;">正常</div>
<div class="t" style="left:229.50px;top:253.30px;height:10.00px;line-height:10.00px;text-align:left;font-size:6.1px;color:#000;">车身贴</div>
<div class="cb" style="left:269px;top:256px"></div>
<div class="cb" style="left:293px;top:256px"></div>
<div class="cb" style="left:317px;top:256px"></div>
<div class="cb" style="left:341px;top:256px"></div>
<div class="cb" style="left:429px;top:256px"></div>
<div class="t" style="left:514.50px;top:253.30px;height:10.00px;line-height:10.00px;text-align:left;font-size:6.1px;color:#000;">超级用户</div>
<div class="t" style="left:541.50px;top:253.30px;height:10.00px;line-height:10.00px;text-align:left;font-size:6.1px;color:#000;">未指定</div>
<div class="t" style="left:655.50px;top:253.30px;height:10.00px;line-height:10.00px;text-align:left;font-size:6.1px;color:#000;">室内写真</div>
<div class="t" style="left:684.50px;top:253.30px;height:10.00px;line-height:10.00px;text-align:left;font-size:6.1px;color:#000;">车身贴</div>
<div class="t" style="left:716.80px;top:253.30px;height:10.00px;line-height:10.00px;text-align:left;font-size:5.8px;-webkit-text-stroke:0.05px currentColor;color:#222;">12.00</div>
<div class="t" style="left:735.80px;top:253.30px;height:10.00px;line-height:10.00px;text-align:left;font-size:5.8px;-webkit-text-stroke:0.05px currentColor;color:#222;">496.80</div>
<div class="t" style="left:1.00px;top:264.80px;width:11.00px;height:9.00px;line-height:9.00px;text-align:center;font-size:5.8px;-webkit-text-stroke:0.05px currentColor;color:#222;font-size:6px">26</div>
<div class="t" style="left:171.00px;top:264.30px;width:23.00px;height:9.00px;line-height:9.00px;text-align:right;font-size:6.1px;color:#000;">正常</div>
<div class="t" style="left:229.50px;top:264.30px;height:9.00px;line-height:9.00px;text-align:left;font-size:6.1px;color:#000;">背胶</div>
<div class="ck" style="left:269px;top:266px"></div>
<div class="ck" style="left:293px;top:266px"></div>
<div class="cb" style="left:317px;top:266px"></div>
<div class="ck" style="left:341px;top:266px"></div>
<div class="cb" style="left:429px;top:266px"></div>
<div class="t" style="left:514.50px;top:264.30px;height:9.00px;line-height:9.00px;text-align:left;font-size:6.1px;color:#000;">超级用户</div>
<div class="t" style="left:541.50px;top:264.30px;height:9.00px;line-height:9.00px;text-align:left;font-size:6.1px;color:#000;">未指定</div>
<div class="t" style="left:598.50px;top:264.30px;height:9.00px;line-height:9.00px;text-align:left;font-size:5.8px;-webkit-text-stroke:0.05px currentColor;color:#222;">2014-08-07 00:00</div>
<div class="t" style="left:655.50px;top:264.30px;height:9.00px;line-height:9.00px;text-align:left;font-size:6.1px;color:#000;">室内写真</div>
<div class="t" style="left:684.50px;top:264.30px;height:9.00px;line-height:9.00px;text-align:left;font-size:6.1px;color:#000;">背胶</div>
<div class="t" style="left:716.80px;top:264.30px;height:9.00px;line-height:9.00px;text-align:left;font-size:5.8px;-webkit-text-stroke:0.05px currentColor;color:#222;">3.00</div>
<div class="t" style="left:735.80px;top:264.30px;height:9.00px;line-height:9.00px;text-align:left;font-size:5.8px;-webkit-text-stroke:0.05px currentColor;color:#222;">64.80</div>
<div class="t" style="left:1.00px;top:274.80px;width:11.00px;height:10.00px;line-height:10.00px;text-align:center;font-size:5.8px;-webkit-text-stroke:0.05px currentColor;color:#222;font-size:6px">27</div>
<div class="t" style="left:171.00px;top:274.30px;width:23.00px;height:10.00px;line-height:10.00px;text-align:right;font-size:6.1px;color:#000;">正常</div>
<div class="t" style="left:229.50px;top:274.30px;height:10.00px;line-height:10.00px;text-align:left;font-size:6.1px;color:#000;">背胶</div>
<div class="ck" style="left:269px;top:277px"></div>
<div class="ck" style="left:293px;top:277px"></div>
<div class="cb" style="left:317px;top:277px"></div>
<div class="ck" style="left:341px;top:277px"></div>
<div class="cb" style="left:429px;top:277px"></div>
<div class="t" style="left:514.50px;top:274.30px;height:10.00px;line-height:10.00px;text-align:left;font-size:6.1px;color:#000;">超级用户</div>
<div class="t" style="left:541.50px;top:274.30px;height:10.00px;line-height:10.00px;text-align:left;font-size:6.1px;color:#000;">未指定</div>
<div class="t" style="left:598.50px;top:274.30px;height:10.00px;line-height:10.00px;text-align:left;font-size:5.8px;-webkit-text-stroke:0.05px currentColor;color:#222;">2014-08-07 00:00</div>
<div class="t" style="left:655.50px;top:274.30px;height:10.00px;line-height:10.00px;text-align:left;font-size:6.1px;color:#000;">室内写真</div>
<div class="t" style="left:684.50px;top:274.30px;height:10.00px;line-height:10.00px;text-align:left;font-size:6.1px;color:#000;">背胶</div>
<div class="t" style="left:716.80px;top:274.30px;height:10.00px;line-height:10.00px;text-align:left;font-size:5.8px;-webkit-text-stroke:0.05px currentColor;color:#222;">12.00</div>
<div class="t" style="left:735.80px;top:274.30px;height:10.00px;line-height:10.00px;text-align:left;font-size:5.8px;-webkit-text-stroke:0.05px currentColor;color:#222;">259.20</div>
<div class="t" style="left:1.00px;top:285.80px;width:11.00px;height:9.00px;line-height:9.00px;text-align:center;font-size:5.8px;-webkit-text-stroke:0.05px currentColor;color:#222;font-size:6px">28</div>
<div class="t" style="left:171.00px;top:285.30px;width:23.00px;height:9.00px;line-height:9.00px;text-align:right;font-size:6.1px;color:#000;">正常</div>
<div class="t" style="left:229.50px;top:285.30px;height:9.00px;line-height:9.00px;text-align:left;font-size:6.1px;color:#000;">背胶</div>
<div class="ck" style="left:269px;top:287px"></div>
<div class="ck" style="left:293px;top:287px"></div>
<div class="cb" style="left:317px;top:287px"></div>
<div class="ck" style="left:341px;top:287px"></div>
<div class="cb" style="left:429px;top:287px"></div>
<div class="t" style="left:514.50px;top:285.30px;height:9.00px;line-height:9.00px;text-align:left;font-size:6.1px;color:#000;">超级用户</div>
<div class="t" style="left:541.50px;top:285.30px;height:9.00px;line-height:9.00px;text-align:left;font-size:6.1px;color:#000;">未指定</div>
<div class="t" style="left:598.50px;top:285.30px;height:9.00px;line-height:9.00px;text-align:left;font-size:5.8px;-webkit-text-stroke:0.05px currentColor;color:#222;">2014-08-07 00:00</div>
<div class="t" style="left:655.50px;top:285.30px;height:9.00px;line-height:9.00px;text-align:left;font-size:6.1px;color:#000;">室内写真</div>
<div class="t" style="left:684.50px;top:285.30px;height:9.00px;line-height:9.00px;text-align:left;font-size:6.1px;color:#000;">背胶</div>
<div class="t" style="left:716.80px;top:285.30px;height:9.00px;line-height:9.00px;text-align:left;font-size:5.8px;-webkit-text-stroke:0.05px currentColor;color:#222;">3.00</div>
<div class="t" style="left:735.80px;top:285.30px;height:9.00px;line-height:9.00px;text-align:left;font-size:5.8px;-webkit-text-stroke:0.05px currentColor;color:#222;">64.80</div>
<div class="t" style="left:1.00px;top:295.80px;width:11.00px;height:10.00px;line-height:10.00px;text-align:center;font-size:5.8px;-webkit-text-stroke:0.05px currentColor;color:#222;font-size:6px">29</div>
<div class="t" style="left:171.00px;top:295.30px;width:23.00px;height:10.00px;line-height:10.00px;text-align:right;font-size:6.1px;color:#000;">正常</div>
<div class="t" style="left:229.50px;top:295.30px;height:10.00px;line-height:10.00px;text-align:left;font-size:6.1px;color:#000;">背胶</div>
<div class="ck" style="left:269px;top:298px"></div>
<div class="ck" style="left:293px;top:298px"></div>
<div class="cb" style="left:317px;top:298px"></div>
<div class="ck" style="left:341px;top:298px"></div>
<div class="cb" style="left:429px;top:298px"></div>
<div class="t" style="left:514.50px;top:295.30px;height:10.00px;line-height:10.00px;text-align:left;font-size:6.1px;color:#000;">超级用户</div>
<div class="t" style="left:541.50px;top:295.30px;height:10.00px;line-height:10.00px;text-align:left;font-size:6.1px;color:#000;">未指定</div>
<div class="t" style="left:598.50px;top:295.30px;height:10.00px;line-height:10.00px;text-align:left;font-size:5.8px;-webkit-text-stroke:0.05px currentColor;color:#222;">2014-08-07 00:00</div>
<div class="t" style="left:655.50px;top:295.30px;height:10.00px;line-height:10.00px;text-align:left;font-size:6.1px;color:#000;">室内写真</div>
<div class="t" style="left:684.50px;top:295.30px;height:10.00px;line-height:10.00px;text-align:left;font-size:6.1px;color:#000;">背胶</div>
<div class="t" style="left:716.80px;top:295.30px;height:10.00px;line-height:10.00px;text-align:left;font-size:5.8px;-webkit-text-stroke:0.05px currentColor;color:#222;">12.00</div>
<div class="t" style="left:735.80px;top:295.30px;height:10.00px;line-height:10.00px;text-align:left;font-size:5.8px;-webkit-text-stroke:0.05px currentColor;color:#222;">259.20</div>
<div class="t" style="left:1.00px;top:306.80px;width:11.00px;height:9.00px;line-height:9.00px;text-align:center;font-size:5.8px;-webkit-text-stroke:0.05px currentColor;color:#222;font-size:6px">30</div>
<div class="t" style="left:171.00px;top:306.30px;width:23.00px;height:9.00px;line-height:9.00px;text-align:right;font-size:6.1px;color:#000;">正常</div>
<div class="t" style="left:229.50px;top:306.30px;height:9.00px;line-height:9.00px;text-align:left;font-size:6.1px;color:#000;">背胶</div>
<div class="ck" style="left:269px;top:308px"></div>
<div class="ck" style="left:293px;top:308px"></div>
<div class="cb" style="left:317px;top:308px"></div>
<div class="ck" style="left:341px;top:308px"></div>
<div class="cb" style="left:429px;top:308px"></div>
<div class="t" style="left:514.50px;top:306.30px;height:9.00px;line-height:9.00px;text-align:left;font-size:6.1px;color:#000;">超级用户</div>
<div class="t" style="left:541.50px;top:306.30px;height:9.00px;line-height:9.00px;text-align:left;font-size:6.1px;color:#000;">未指定</div>
<div class="t" style="left:598.50px;top:306.30px;height:9.00px;line-height:9.00px;text-align:left;font-size:5.8px;-webkit-text-stroke:0.05px currentColor;color:#222;">2014-08-07 00:00</div>
<div class="t" style="left:655.50px;top:306.30px;height:9.00px;line-height:9.00px;text-align:left;font-size:6.1px;color:#000;">室内写真</div>
<div class="t" style="left:684.50px;top:306.30px;height:9.00px;line-height:9.00px;text-align:left;font-size:6.1px;color:#000;">背胶</div>
<div class="t" style="left:716.80px;top:306.30px;height:9.00px;line-height:9.00px;text-align:left;font-size:5.8px;-webkit-text-stroke:0.05px currentColor;color:#222;">3.00</div>
<div class="t" style="left:735.80px;top:306.30px;height:9.00px;line-height:9.00px;text-align:left;font-size:5.8px;-webkit-text-stroke:0.05px currentColor;color:#222;">64.80</div>
</div>
<div style="left:12.50px;top:445.30px;width:778.40px;height:9.60px;background:#efefef;border-top:1px solid #d0d0d0"></div>
<div style="left:24.00px;top:445.30px;width:1.00px;height:9.60px;background:#d8d8d8"></div>
<div style="left:59.00px;top:446.00px;width:47.00px;height:9.00px;background:#f4f4f4;border-left:1px solid #fff;border-top:1px solid #fff;border-right:1px solid #cfcfcf"></div>
<div class="t" style="left:64.00px;top:446.80px;font-size:6.2px;line-height:8px;color:#111">共计:73条明细</div>
<div style="left:728.00px;top:446.30px;width:18.50px;height:8.60px;background:#e6e6e6;border:1px solid #d6d6d6"></div>
<div style="left:747.00px;top:446.30px;width:35.50px;height:8.60px;background:#e6e6e6;border:1px solid #d6d6d6"></div>
<div class="t" style="left:729.00px;top:447.30px;font-size:5.8px;-webkit-text-stroke:0.05px currentColor;line-height:8px;color:#111;">9087.1</div>
<div class="t" style="left:748.00px;top:447.30px;font-size:5.8px;-webkit-text-stroke:0.05px currentColor;line-height:8px;color:#111;">81795.67</div>
<div style="left:12.50px;top:455.00px;width:785.50px;height:9.50px;background:#f0f0f0;border-top:1px solid #d8d8d8"></div>
<div style="left:13.50px;top:456.00px;width:7.00px;height:8.00px;background:#fff"></div>
<svg style="position:absolute;left:15px;top:458px" width="3" height="4" viewBox="0 0 3 4"><path d="M3 0 V4 L0 2z" fill="#111"/></svg>
<div style="left:21.50px;top:456.00px;width:737.50px;height:8.00px;background:#eaeaea"></div>
<div style="left:759.00px;top:456.00px;width:26.00px;height:8.00px;background:#fbfbfb"></div>
<svg style="position:absolute;left:785px;top:458px" width="3" height="4" viewBox="0 0 3 4"><path d="M0 0 V4 L3 2z" fill="#111"/></svg>
<div style="left:790.50px;top:455.00px;width:7.50px;height:9.50px;background:#f0f0f0"></div>
<div style="left:790.90px;top:127.20px;width:7.10px;height:327.80px;background:#f0f0f0;border-left:1px solid #e0e0e0"></div>
<svg style="position:absolute;left:792.5px;top:131px" width="4" height="3" viewBox="0 0 4 3"><path d="M0 3 H4 L2 0z" fill="#111"/></svg>
<svg style="position:absolute;left:792.5px;top:450.5px" width="4" height="3" viewBox="0 0 4 3"><path d="M0 0 H4 L2 3z" fill="#111"/></svg>
<div style="left:798.00px;top:39.00px;width:2.00px;height:426.00px;background:#262a31"></div>
<div style="left:797.00px;top:91.00px;width:1.00px;height:35.00px;background:#c8c8c8"></div>
<div style="left:0.00px;top:465.00px;width:800.00px;height:14.00px;background:#2c3039"></div>
<svg style="position:absolute;left:1px;top:467px" width="8" height="7" viewBox="0 0 8 7"><path d="M0.5 2 H7 M5 0.3 L7 2 M7.5 5 H1 M3 6.7 L1 5" stroke="#d8d8d8" stroke-width="0.9" fill="none"/></svg>
<svg style="position:absolute;left:15px;top:467px" width="8" height="8" viewBox="0 0 8 8"><circle cx="2.5" cy="5.5" r="1.8" fill="none" stroke="#e8b400" stroke-width="1"/><circle cx="5.5" cy="2.5" r="1.8" fill="none" stroke="#e8b400" stroke-width="1"/></svg>
<div class="t" style="left:25.00px;top:467.30px;font-size:5.9px;line-height:8px;color:#7fd62a">网络情况:良好</div>
<svg style="position:absolute;left:80px;top:467px" width="6" height="8" viewBox="0 0 6 8"><rect x="0" y="0" width="6" height="8" fill="#e8b400"/><path d="M0 2.7H6M0 5.3H6" stroke="#2c3039" stroke-width="0.7"/></svg>
<div class="t" style="left:89.50px;top:467.30px;font-size:5.9px;line-height:8px;color:#e6e6e6;">服务器:<span style="display:inline-block;transform:scaleX(0.8);transform-origin:0 50%;font-family:Liberation Mono,monospace;font-size:6.6px">127.0.0.1:7798</span></div>
<svg style="position:absolute;left:175px;top:467px" width="9" height="8" viewBox="0 0 9 8"><rect x="0.3" y="1.5" width="8.4" height="6" rx="1" fill="#e8b400"/><rect x="2" y="0.3" width="5" height="2" fill="#e8b400"/><path d="M2 4.5h5" stroke="#2c3039" stroke-width="0.8"/></svg>
<div class="t" style="left:185.50px;top:467.30px;font-size:5.9px;line-height:8px;color:#e6e6e6">账套: 演示账套</div>
<svg style="position:absolute;left:270px;top:467.5px" width="8" height="7" viewBox="0 0 8 7"><path d="M0.6 3.4 L3 5.8 L7.4 0.8" stroke="#e8c400" stroke-width="1.4" fill="none"/></svg>
<div class="t" style="left:281.30px;top:467.30px;font-size:5.9px;line-height:8px;color:#8ed61e">正版授权|终身使用</div>
<svg style="position:absolute;left:339px;top:467px" width="7" height="8" viewBox="0 0 7 8"><path d="M3.5 0 V5 M1.3 3 L3.5 5.2 L5.7 3 M0.5 7.3 H6.5" stroke="#e8c400" stroke-width="1.1" fill="none"/></svg>
<div class="t" style="left:348.70px;top:467.30px;font-size:5.9px;line-height:8px;color:#e6e6e6">导入证书</div>
<svg style="position:absolute;left:378px;top:467px" width="8" height="8" viewBox="0 0 8 8"><circle cx="4" cy="2.5" r="2.2" fill="#e8c400"/><path d="M0.3 8 Q4 3.5 7.7 8z" fill="#e8c400"/></svg>
<div class="t" style="left:388.00px;top:467.30px;font-size:5.9px;line-height:8px;color:#e6e6e6">在线客服</div>
<svg style="position:absolute;left:419.5px;top:466.5px" width="6" height="8" viewBox="0 0 6 8"><path d="M1.3 3.5 V2.2 A1.7 1.7 0 0 1 4.7 2.2 V3.5" stroke="#e8c400" stroke-width="0.9" fill="none"/><rect x="0.3" y="3.5" width="5.4" height="4.3" fill="#e8c400"/></svg>
<div class="t" style="left:428.00px;top:467.30px;font-size:5.9px;line-height:8px;color:#e6e6e6">锁屏</div>
<svg style="position:absolute;left:714px;top:466.5px" width="9" height="9" viewBox="0 0 9 9"><circle cx="4.5" cy="4.5" r="3.9" fill="none" stroke="#e8c400" stroke-width="0.9"/><circle cx="4.5" cy="3.5" r="1.3" fill="#e8c400"/><path d="M2.3 7 Q4.5 4.5 6.7 7z" fill="#e8c400"/></svg>
<div class="t" style="left:726.00px;top:467.30px;font-size:5.9px;line-height:8px;color:#e6e6e6">超级用户</div>
<svg style="position:absolute;left:758.5px;top:467.5px" width="8" height="7" viewBox="0 0 8 7"><path d="M0.5 2.5 H6 L4.5 0.8 M7.5 4.5 H2 L3.5 6.2" stroke="#e8c400" stroke-width="1.3" fill="none"/></svg>
<div class="t" style="left:770.00px;top:467.30px;font-size:5.9px;line-height:8px;color:#e6e6e6">切换用户</div>
<div style="left:795px;top:463px;width:16px;height:16px;border-radius:8px;background:#f07a2a"></div>
</div></body></html>
